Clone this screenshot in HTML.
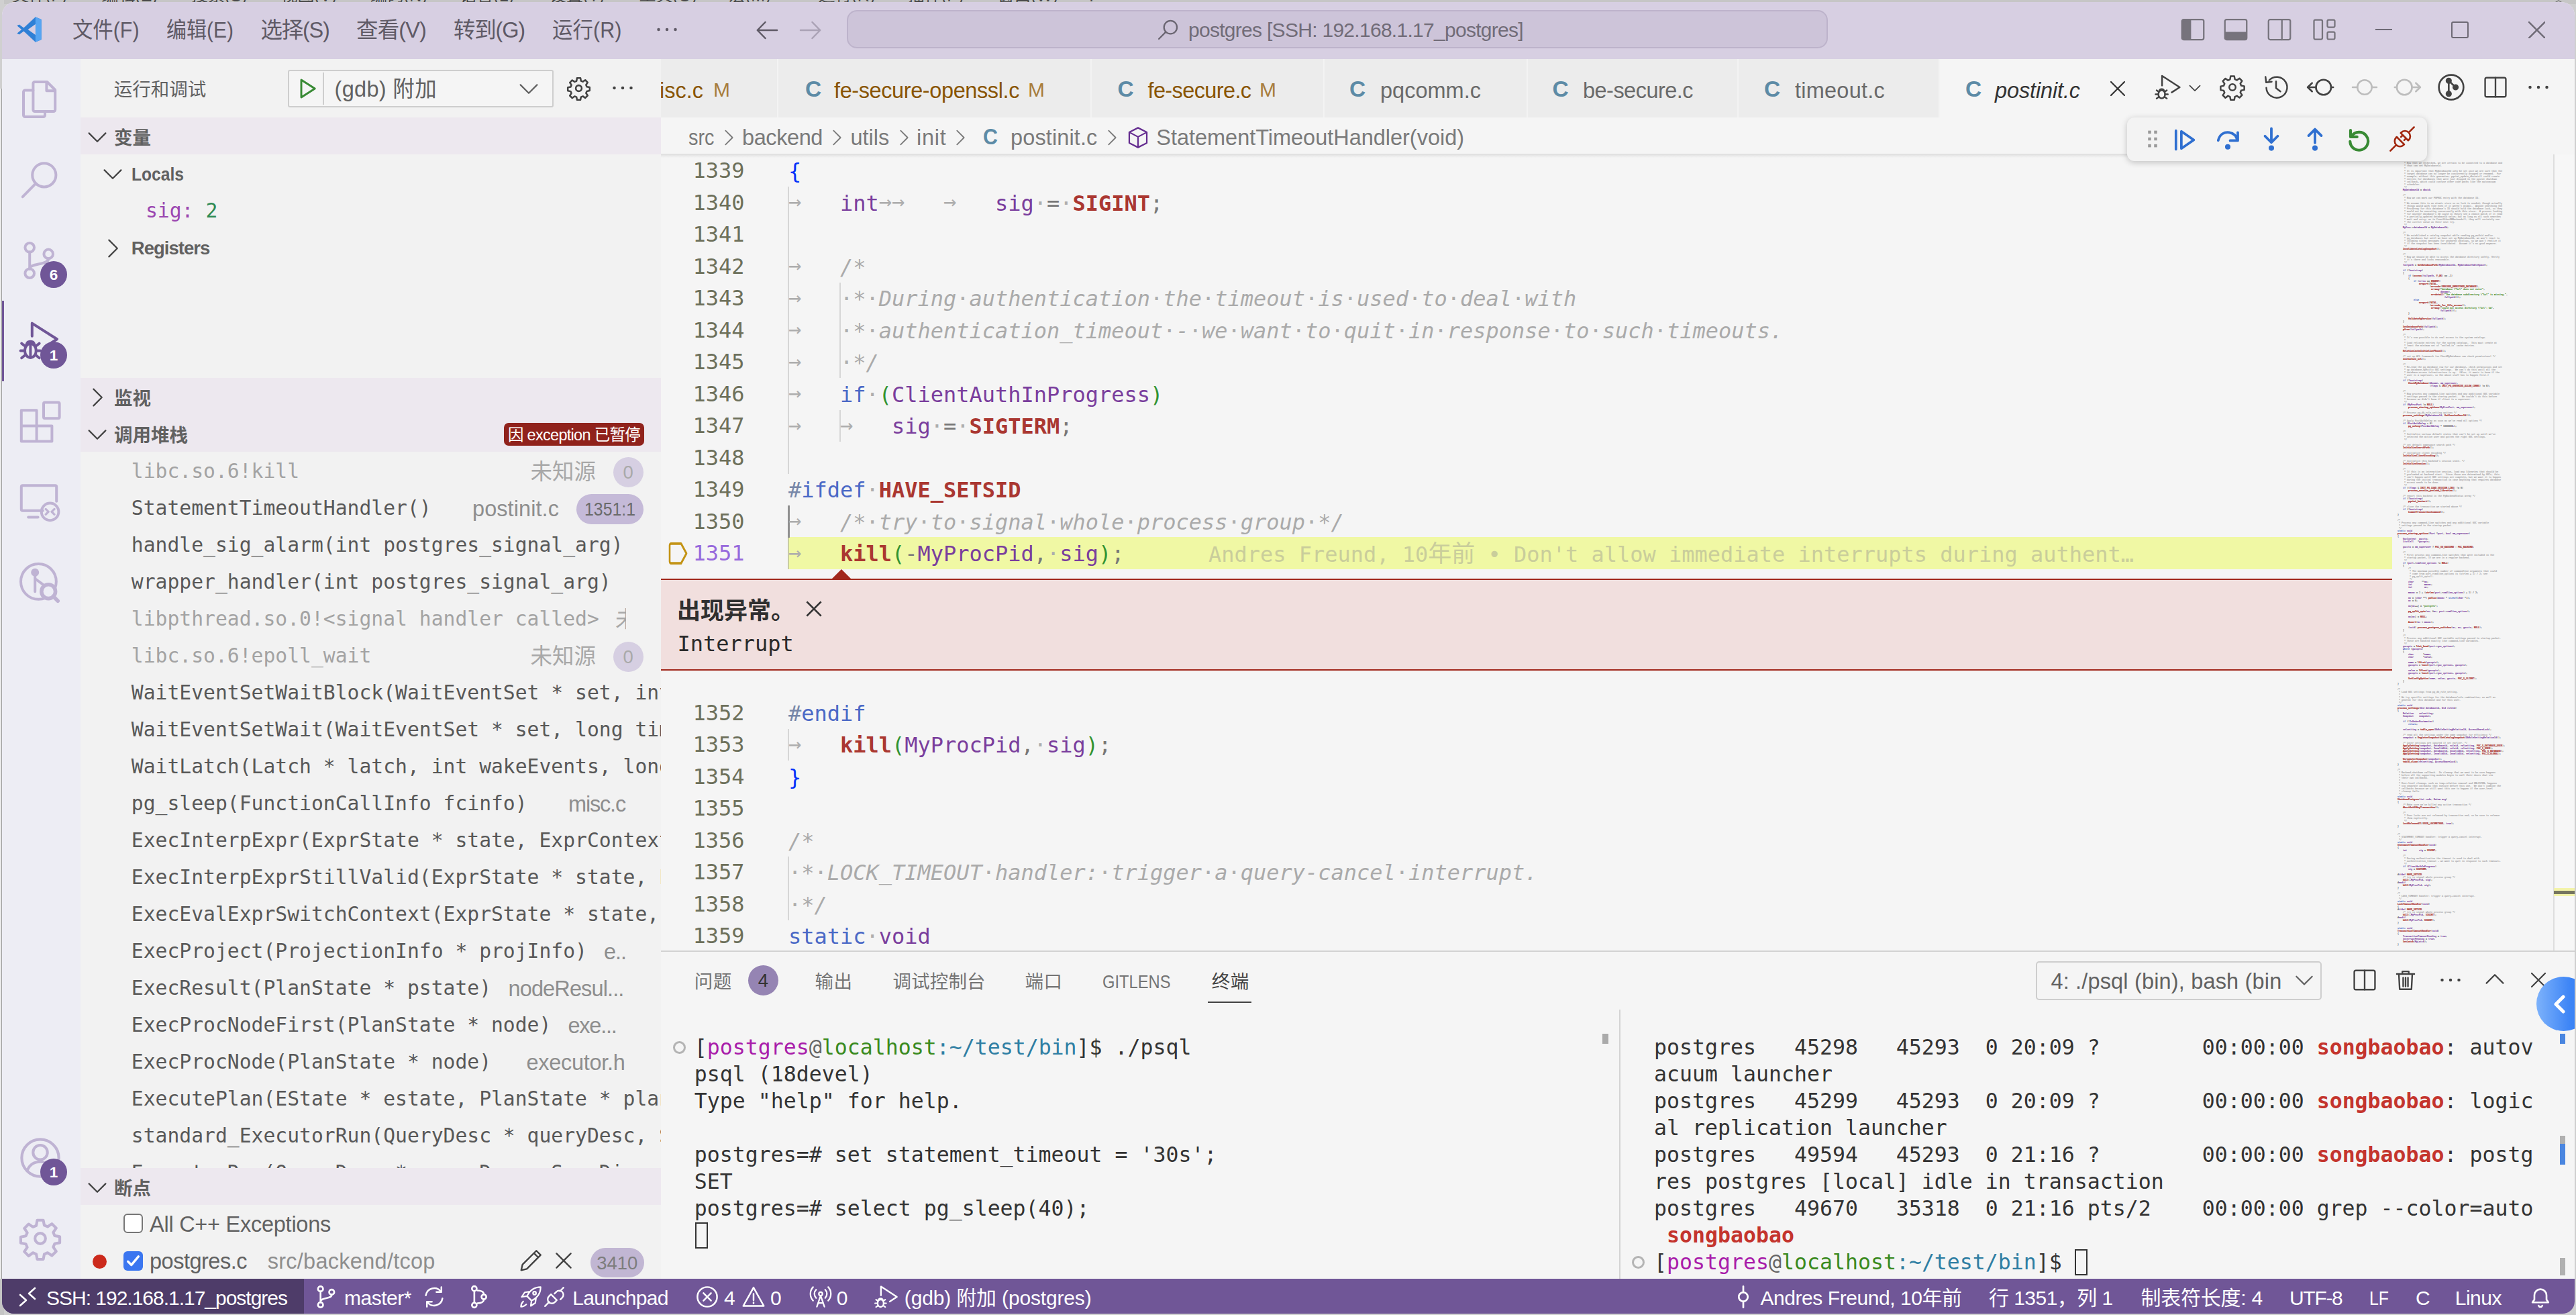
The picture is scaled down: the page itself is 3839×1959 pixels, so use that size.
<!DOCTYPE html>
<html lang="zh-CN"><head><meta charset="utf-8"><title>postinit.c - postgres [SSH: 192.168.1.17_postgres] - Visual Studio Code</title><style>
html,body{margin:0;padding:0}
body{width:3839px;height:1959px;overflow:hidden;background:#cfcfcf;position:relative;font-family:"Liberation Sans","Noto Sans CJK SC",sans-serif}
div,span,svg{position:absolute;box-sizing:border-box}
span{white-space:pre}
.u{font-family:"Liberation Sans","Noto Sans CJK SC",sans-serif}
.m{font-family:"DejaVu Sans Mono","Liberation Mono","Noto Sans CJK SC",monospace}
span span,span b,span i,.mm span,.mm b{position:static}
.mm{font-family:"DejaVu Sans Mono","Liberation Mono","Noto Sans CJK SC",monospace;white-space:pre;color:#777;-webkit-text-stroke:1.1px currentColor}
.mm .c{color:#aaa}.mm .k{color:#4b69c6}.mm .p{color:#7a3e9d}.mm .s{color:#448c27}.mm b{color:#aa3731}
</style></head>
<body>
<div style="left:0px;top:0px;width:3839px;height:6px;background:#c6c6c6;"></div>
<div style="left:0px;top:0px;width:6px;height:1959px;background:#d0d0d0;"></div>
<div style="left:0px;top:132px;width:2px;height:1773px;background:#ececec;"></div>
<div style="left:2px;top:132px;width:1.5px;height:1773px;background:#9c9c9c;"></div>
<div style="left:0px;top:1905px;width:6px;height:60px;background:#c4c4c4;"></div>
<div style="left:0px;top:0px;width:1700px;height:3px;overflow:hidden;">
<span class="u" style="top:-27.00px;font-size:25px;line-height:40px;color:#4a4a4a;left:18.0px;">文件(F)</span>
<span class="u" style="top:-27.00px;font-size:25px;line-height:40px;color:#4a4a4a;left:151.5px;">编辑(E)</span>
<span class="u" style="top:-27.00px;font-size:25px;line-height:40px;color:#4a4a4a;left:285.0px;">搜索(S)</span>
<span class="u" style="top:-27.00px;font-size:25px;line-height:40px;color:#4a4a4a;left:418.5px;">视图(V)</span>
<span class="u" style="top:-27.00px;font-size:25px;line-height:40px;color:#4a4a4a;left:552.0px;">编码(N)</span>
<span class="u" style="top:-27.00px;font-size:25px;line-height:40px;color:#4a4a4a;left:685.5px;">语言(L)</span>
<span class="u" style="top:-27.00px;font-size:25px;line-height:40px;color:#4a4a4a;left:819.0px;">设置(T)</span>
<span class="u" style="top:-27.00px;font-size:25px;line-height:40px;color:#4a4a4a;left:952.5px;">工具(O)</span>
<span class="u" style="top:-27.00px;font-size:25px;line-height:40px;color:#4a4a4a;left:1086.0px;">宏(M)</span>
<span class="u" style="top:-27.00px;font-size:25px;line-height:40px;color:#4a4a4a;left:1219.5px;">运行(R)</span>
<span class="u" style="top:-27.00px;font-size:25px;line-height:40px;color:#4a4a4a;left:1353.0px;">插件(P)</span>
<span class="u" style="top:-27.00px;font-size:25px;line-height:40px;color:#4a4a4a;left:1486.5px;">窗口(W)</span>
<span class="u" style="top:-27.00px;font-size:25px;line-height:40px;color:#4a4a4a;left:1620.0px;">?</span>
</div>
<div style="left:3808px;top:0px;width:10px;height:3px;background:#7a7a7a;clip-path:polygon(50% 0,100% 100%,75% 100%,50% 50%,25% 100%,0 100%);"></div>
<div style="left:3px;top:3px;width:3834px;height:1954px;overflow:hidden;background:#f5f5f5;border-radius:20px 20px 18px 18px;">
</div>
<div style="left:3px;top:3px;width:3834px;height:85px;background:#d7cfe2;border-radius:20px 20px 0 0;"></div>
<svg style="left:22px;top:24px;color:#616161;" width="43" height="40" viewBox="0 0 15.5 16" fill="none" stroke="currentColor" stroke-width="1" stroke-linecap="round" stroke-linejoin="round"><path d="M11.500 0.500L4.500 7 1.800 5 .5 5.700 3.200 8 .5 10.300l1.300.7L4.500 9l7 6.500 3.500-1.500V2z" fill="#2f80d6" stroke="none"/><path d="M11.500 .5l3.500 1.500v12l-3.500 1.500z" fill="#56a5f2" stroke="none"/><path d="M11.500 4.800L7 8l4.500 3.200z" fill="#d7cfe2" stroke="none"/></svg>
<span class="u" style="top:19.00px;font-size:32.5px;line-height:52px;color:#5f5a66;left:107.5px;transform:scaleX(0.9343);transform-origin:0 50%;">文件(F)</span>
<span class="u" style="top:19.00px;font-size:32.5px;line-height:52px;color:#5f5a66;left:248px;transform:scaleX(0.9231);transform-origin:0 50%;">编辑(E)</span>
<span class="u" style="top:19.00px;font-size:32.5px;line-height:52px;color:#5f5a66;left:388.6px;letter-spacing:-1.286px;">选择(S)</span>
<span class="u" style="top:19.00px;font-size:32.5px;line-height:52px;color:#5f5a66;left:531px;letter-spacing:-0.866px;">查看(V)</span>
<span class="u" style="top:19.00px;font-size:32.5px;line-height:52px;color:#5f5a66;left:676px;letter-spacing:-1.188px;">转到(G)</span>
<span class="u" style="top:19.00px;font-size:32.5px;line-height:52px;color:#5f5a66;left:822.6px;transform:scaleX(0.9389);transform-origin:0 50%;">运行(R)</span>
<svg style="left:974.0px;top:24.0px;color:#5f5a66;" width="40" height="40" viewBox="0 0 16 16" fill="none" stroke="currentColor" stroke-width="1.0" stroke-linecap="round" stroke-linejoin="round"><circle cx="3" cy="8" r=".9" fill="currentColor" stroke="none"/><circle cx="8" cy="8" r=".9" fill="currentColor" stroke="none"/><circle cx="13" cy="8" r=".9" fill="currentColor" stroke="none"/></svg>
<svg style="left:1123.0px;top:25.0px;color:#5f5a66;" width="40" height="40" viewBox="0 0 16 16" fill="none" stroke="currentColor" stroke-width="1.0" stroke-linecap="round" stroke-linejoin="round"><path d="M14 8H2.5M7 3.200L2.300 8l4.700 4.800"/></svg>
<svg style="left:1188.0px;top:25.0px;color:#aaa2b5;" width="40" height="40" viewBox="0 0 16 16" fill="none" stroke="currentColor" stroke-width="1.0" stroke-linecap="round" stroke-linejoin="round"><path d="M2 8h11.500M9 3.200L13.700 8 9 12.800"/></svg>
<div style="left:1262px;top:15px;width:1462px;height:57px;background:#cdc4d9;border:2px solid #bdb3cb;border-radius:15px;"></div>
<svg style="left:1723.0px;top:26.0px;color:#6a6571;" width="36" height="36" viewBox="0 0 16 16" fill="none" stroke="currentColor" stroke-width="1.0" stroke-linecap="round" stroke-linejoin="round"><circle cx="9.500" cy="6.500" r="4.300"/><path d="M6.400 9.600L1.800 14.200"/></svg>
<span class="u" style="top:20.50px;font-size:30px;line-height:48px;color:#716c78;left:1771px;letter-spacing:-0.712px;">postgres [SSH: 192.168.1.17_postgres]</span>
<svg style="left:3247.5px;top:23.5px;color:#76737c;" width="40" height="40" viewBox="0 0 16 16" fill="none" stroke="currentColor" stroke-width="0.9" stroke-linecap="round" stroke-linejoin="round"><rect x="1.5" y="2" width="13" height="12" rx="1"/><path d="M2 2.500h4.500v11H2z" fill="currentColor"/></svg>
<svg style="left:3312.0px;top:23.5px;color:#76737c;" width="40" height="40" viewBox="0 0 16 16" fill="none" stroke="currentColor" stroke-width="0.9" stroke-linecap="round" stroke-linejoin="round"><rect x="1.5" y="2" width="13" height="12" rx="1"/><path d="M2 9.800h12v3.700H2z" fill="currentColor"/></svg>
<svg style="left:3377.0px;top:23.5px;color:#76737c;" width="40" height="40" viewBox="0 0 16 16" fill="none" stroke="currentColor" stroke-width="0.9" stroke-linecap="round" stroke-linejoin="round"><rect x="1.5" y="2" width="13" height="12" rx="1"/><path d="M9.500 2v12"/></svg>
<svg style="left:3444.0px;top:23.5px;color:#76737c;" width="40" height="40" viewBox="0 0 16 16" fill="none" stroke="currentColor" stroke-width="0.9" stroke-linecap="round" stroke-linejoin="round"><rect x="1.800" y="2.200" width="5" height="11.600" rx=".8"/><rect x="9.800" y="2.200" width="4.400" height="4.400" rx=".8"/><rect x="9.800" y="9.400" width="4.400" height="4.400" rx=".8"/></svg>
<div style="left:3540px;top:43px;width:25px;height:2px;background:#6e6a75;"></div>
<div style="left:3653px;top:32px;width:25.5px;height:25px;background:transparent;border:2.500px solid #6e6a75;border-radius:3px;"></div>
<svg style="left:3767.5px;top:31.5px;color:#6e6a75;" width="25.5" height="25.5" viewBox="0 0 16 16" fill="none" stroke="currentColor" stroke-width="1.5" stroke-linecap="round" stroke-linejoin="round"><path d="M.5.5l15 15M15.500.5l-15 15"/></svg>
<div style="left:3px;top:88px;width:117px;height:1817px;background:#ededf4;"></div>
<svg style="left:27.0px;top:115.5px;color:#bfb3d3;" width="64" height="64" viewBox="0 0 16 16" fill="none" stroke="currentColor" stroke-width="1.0" stroke-linecap="round" stroke-linejoin="round"><path d="M5.6 4.6V2.1a.6.6 0 0 1 .6-.6h4.6l3 3v7.4a.6.6 0 0 1-.6.6H10"/><path d="M10.6 1.6v3.2h3.1"/><path d="M5.6 4.6H2.6a.6.6 0 0 0-.6.6v8.7a.6.6 0 0 0 .6.6h6.8a.6.6 0 0 0 .6-.6V12.5H6.2a.6.6 0 0 1-.6-.6z"/></svg>
<svg style="left:27.0px;top:235.5px;color:#bfb3d3;" width="64" height="64" viewBox="0 0 16 16" fill="none" stroke="currentColor" stroke-width="1.0" stroke-linecap="round" stroke-linejoin="round"><circle cx="9.7" cy="6.2" r="4.4"/><path d="M6.5 9.4L1.7 14.3"/></svg>
<svg style="left:27.0px;top:355.5px;color:#bfb3d3;" width="64" height="64" viewBox="0 0 16 16" fill="none" stroke="currentColor" stroke-width="1.0" stroke-linecap="round" stroke-linejoin="round"><circle cx="4.3" cy="3.2" r="1.7"/><circle cx="4.3" cy="12.8" r="1.7"/><circle cx="11.3" cy="5.6" r="1.7"/><path d="M4.3 4.9v6.2"/><path d="M11.3 7.3c0 2.6-7 1.6-7 3.8"/></svg>
<svg style="left:27.0px;top:475.5px;color:#705697;" width="64" height="64" viewBox="0 0 16 16" fill="none" stroke="currentColor" stroke-width="1.0" stroke-linecap="round" stroke-linejoin="round"><path d="M5.2 6.2V1.4l9.3 5.9-3.4 2.2"/><ellipse cx="4.6" cy="11.6" rx="2.1" ry="2.6"/><path d="M3 9.6C3.2 8.6 3.9 8.2 4.6 8.2s1.4.4 1.6 1.4"/><path d="M2.5 11.6H.9M8.3 11.6H6.7M2.7 10L1.3 8.9M6.5 10l1.4-1.1M2.7 13.2l-1.4 1.1M6.5 13.2l1.4 1.1M4.6 9.2v5"/></svg>
<svg style="left:27.0px;top:595.5px;color:#bfb3d3;" width="64" height="64" viewBox="0 0 16 16" fill="none" stroke="currentColor" stroke-width="1.0" stroke-linecap="round" stroke-linejoin="round"><path d="M1.2 3.8h5.700v11.600H1.200zM1.200 9.600h11.400M6.900 9.600h5.700v5.800H1.200" /><rect x="9.500" y=".9" width="5.900" height="5.900" rx=".5"/></svg>
<svg style="left:27.0px;top:715.5px;color:#bfb3d3;" width="64" height="64" viewBox="0 0 16 16" fill="none" stroke="currentColor" stroke-width="1.0" stroke-linecap="round" stroke-linejoin="round"><path d="M9.2 11.2H1.7a.5.5 0 0 1-.5-.5V2.3a.5.5 0 0 1 .5-.5h12.1a.5.5 0 0 1 .5.5v5.4"/><path d="M3.8 13.6h3.6"/><circle cx="11.9" cy="11.6" r="3.2"/><path d="M10.3 10.6l1 1-1 1M13.5 10.6l-1 1 1 1" stroke-width=".8"/></svg>
<svg style="left:27.0px;top:835.5px;color:#bfb3d3;" width="64" height="64" viewBox="0 0 16 16" fill="none" stroke="currentColor" stroke-width="1.0" stroke-linecap="round" stroke-linejoin="round"><circle cx="7.6" cy="7.6" r="6.6"/><circle cx="6.3" cy="4.2" r="1" fill="currentColor"/><path d="M6.3 5v6.3M6.3 6.5l3 2.2"/><circle cx="11.3" cy="11.3" r="2.6" stroke-width="1.4" fill="#ededf5"/><path d="M13.2 13.2l1.6 1.6" stroke-width="1.4"/></svg>
<div style="left:3px;top:447.5px;width:2.5px;height:120px;background:#705697;"></div>
<svg style="left:26.5px;top:1692.0px;color:#bfb3d3;" width="66" height="66" viewBox="0 0 16 16" fill="none" stroke="currentColor" stroke-width="1.0" stroke-linecap="round" stroke-linejoin="round"><circle cx="8" cy="8" r="6.7"/><circle cx="8" cy="6" r="2.6"/><path d="M3.3 12.6c.8-2.2 2.5-3.2 4.7-3.2s3.9 1 4.7 3.2"/></svg>
<svg style="left:26.5px;top:1812.0px;color:#bfb3d3;" width="66" height="66" viewBox="0 0 16 16" fill="none" stroke="currentColor" stroke-width="1.0" stroke-linecap="round" stroke-linejoin="round"><circle cx="8" cy="8" r="1.9"/><path d="M6.9 1.4h2.2l.35 1.85 1.2.5 1.55-1.05 1.55 1.55-1.05 1.55.5 1.2 1.85.35v2.2l-1.85.35-.5 1.2 1.05 1.55-1.55 1.55-1.55-1.05-1.2.5-.35 1.85H6.9l-.35-1.85-1.2-.5L3.8 14.3 2.25 12.75 3.3 11.2l-.5-1.2L.95 9.65v-2.2L2.8 7.1l.5-1.2L2.25 4.35 3.8 2.8l1.55 1.05 1.2-.5z"/></svg>
<div style="left:60px;top:389px;width:40px;height:40px;background:#705697;border-radius:20px;"></div>
<span class="u" style="top:391.50px;font-size:22.5px;line-height:36px;color:#fff;left:60px;font-weight:700;width:40px;text-align:center;">6</span>
<div style="left:60px;top:509px;width:40px;height:40px;background:#705697;border-radius:20px;"></div>
<span class="u" style="top:511.50px;font-size:22.5px;line-height:36px;color:#fff;left:60px;font-weight:700;width:40px;text-align:center;">1</span>
<div style="left:60px;top:1726px;width:40px;height:40px;background:#705697;border-radius:20px;"></div>
<span class="u" style="top:1728.50px;font-size:22.5px;line-height:36px;color:#fff;left:60px;font-weight:700;width:40px;text-align:center;">1</span>
<div style="left:120px;top:88px;width:865px;height:1817px;background:#f2f2f2;"></div>
<span class="u" style="top:112.00px;font-size:27.5px;line-height:44px;color:#616161;left:169.7px;letter-spacing:0.000px;">运行和调试</span>
<div style="left:429px;top:104px;width:396px;height:56px;background:#f5f5f5;border:2px solid #cecece;border-radius:3px;"></div>
<div style="left:481px;top:108px;width:2px;height:48px;background:#cecece;"></div>
<svg style="left:440.0px;top:114.0px;color:#388a34;" width="36" height="36" viewBox="0 0 16 16" fill="none" stroke="currentColor" stroke-width="1.3" stroke-linecap="round" stroke-linejoin="round"><path d="M4 2.2v11.600l9-5.8z"/></svg>
<span class="u" style="top:106.50px;font-size:32.5px;line-height:52px;color:#616161;left:498.5px;letter-spacing:0.324px;">(gdb) 附加</span>
<svg style="left:770.0px;top:114.0px;color:#616161;" width="36" height="36" viewBox="0 0 16 16" fill="none" stroke="currentColor" stroke-width="1.0" stroke-linecap="round" stroke-linejoin="round"><path d="M2.5 5.5L8 11l5.500-5.5"/></svg>
<svg style="left:843.5px;top:112.5px;color:#424242;" width="37" height="37" viewBox="0 0 16 16" fill="none" stroke="currentColor" stroke-width="1.1" stroke-linecap="round" stroke-linejoin="round"><circle cx="8" cy="8" r="1.9"/><path d="M6.9 1.4h2.2l.35 1.85 1.2.5 1.55-1.05 1.55 1.55-1.05 1.55.5 1.2 1.85.35v2.2l-1.85.35-.5 1.2 1.05 1.55-1.55 1.55-1.55-1.05-1.2.5-.35 1.85H6.9l-.35-1.85-1.2-.5L3.8 14.3 2.25 12.75 3.3 11.2l-.5-1.2L.95 9.65v-2.2L2.8 7.1l.5-1.2L2.25 4.35 3.8 2.8l1.55 1.05 1.2-.5z"/></svg>
<svg style="left:907.5px;top:111.0px;color:#424242;" width="40" height="40" viewBox="0 0 16 16" fill="none" stroke="currentColor" stroke-width="1.0" stroke-linecap="round" stroke-linejoin="round"><circle cx="3" cy="8" r=".9" fill="currentColor" stroke="none"/><circle cx="8" cy="8" r=".9" fill="currentColor" stroke="none"/><circle cx="13" cy="8" r=".9" fill="currentColor" stroke="none"/></svg>
<div style="left:120px;top:175px;width:865px;height:55px;background:#ede8ef;"></div>
<svg style="left:127.0px;top:186.0px;color:#424242;" width="36" height="36" viewBox="0 0 16 16" fill="none" stroke="currentColor" stroke-width="1.0" stroke-linecap="round" stroke-linejoin="round"><path d="M2.5 5.5L8 11l5.500-5.5"/></svg>
<span class="u" style="top:183.50px;font-size:27.5px;line-height:44px;color:#616161;left:170px;font-weight:700;letter-spacing:0.000px;">变量</span>
<svg style="left:150.0px;top:241.0px;color:#424242;" width="36" height="36" viewBox="0 0 16 16" fill="none" stroke="currentColor" stroke-width="1.0" stroke-linecap="round" stroke-linejoin="round"><path d="M2.5 5.5L8 11l5.500-5.5"/></svg>
<span class="u" style="top:238.00px;font-size:27.5px;line-height:44px;color:#616161;left:195.8px;font-weight:700;transform:scaleX(0.8953);transform-origin:0 50%;">Locals</span>
<span class="m" style="top:290.00px;font-size:29.7px;line-height:48px;color:#9b46b0;left:217px;"><span style="color:#9b46b0">sig:</span> <span style="color:#2f8a52">2</span></span>
<svg style="left:150.0px;top:352.0px;color:#424242;" width="36" height="36" viewBox="0 0 16 16" fill="none" stroke="currentColor" stroke-width="1.0" stroke-linecap="round" stroke-linejoin="round"><path d="M5.5 2.5L11 8l-5.5 5.500"/></svg>
<span class="u" style="top:348.00px;font-size:27.5px;line-height:44px;color:#616161;left:195.8px;font-weight:700;letter-spacing:-0.983px;">Registers</span>
<div style="left:120px;top:563px;width:865px;height:55px;background:#ede8ef;"></div>
<svg style="left:127.0px;top:574.0px;color:#424242;" width="36" height="36" viewBox="0 0 16 16" fill="none" stroke="currentColor" stroke-width="1.0" stroke-linecap="round" stroke-linejoin="round"><path d="M5.5 2.5L11 8l-5.5 5.500"/></svg>
<span class="u" style="top:571.50px;font-size:27.5px;line-height:44px;color:#616161;left:170px;font-weight:700;letter-spacing:0.000px;">监视</span>
<div style="left:120px;top:618px;width:865px;height:55px;background:#ede8ef;"></div>
<svg style="left:127.0px;top:629.0px;color:#424242;" width="36" height="36" viewBox="0 0 16 16" fill="none" stroke="currentColor" stroke-width="1.0" stroke-linecap="round" stroke-linejoin="round"><path d="M2.5 5.5L8 11l5.500-5.5"/></svg>
<span class="u" style="top:626.50px;font-size:27.5px;line-height:44px;color:#616161;left:170px;font-weight:700;letter-spacing:0.000px;">调用堆栈</span>
<div style="left:751px;top:630px;width:209px;height:34px;background:#90221c;border-radius:7px;"></div>
<span class="u" style="top:628.50px;font-size:23.5px;line-height:38px;color:#fff;left:757px;letter-spacing:-0.710px;">因 exception 已暂停</span>
<div style="left:120px;top:673px;width:865px;height:1067px;overflow:hidden;">
<span class="m" style="top:4.50px;font-size:29.7px;line-height:48px;color:#a3a3a3;left:75.80000000000001px;">libc.so.6!kill</span>
<span class="u" style="top:3.50px;font-size:32.5px;line-height:52px;color:#a8a8a8;left:670.6px;max-width:142px;overflow:hidden;">未知源</span>
<div style="left:794px;top:8.0px;width:45px;height:45px;border-radius:23px;background:#d6cfe2"></div>
<span class="u" style="top:8.50px;font-size:27.5px;line-height:44px;color:#a9a9a9;left:808.5px;">0</span>
<span class="m" style="top:59.50px;font-size:29.7px;line-height:48px;color:#585858;left:75.80000000000001px;">StatementTimeoutHandler()</span>
<span class="u" style="top:58.50px;font-size:32.5px;line-height:52px;color:#8e8e8e;left:584px;letter-spacing:0.073px;">postinit.c</span>
<div style="left:739px;top:63.0px;width:100px;height:45px;border-radius:23px;background:#c5bad8"></div>
<span class="u" style="top:63.50px;font-size:27.5px;line-height:44px;color:#6a6a6a;left:751px;transform:scaleX(0.9034);transform-origin:0 50%;">1351:1</span>
<span class="m" style="top:114.50px;font-size:29.7px;line-height:48px;color:#585858;left:75.80000000000001px;">handle_sig_alarm(int postgres_signal_arg)</span>
<span class="m" style="top:169.50px;font-size:29.7px;line-height:48px;color:#585858;left:75.80000000000001px;">wrapper_handler(int postgres_signal_arg)</span>
<span class="m" style="top:224.50px;font-size:29.7px;line-height:48px;color:#a3a3a3;left:75.80000000000001px;">libpthread.so.0!&lt;signal handler called&gt;</span>
<span class="u" style="top:223.50px;font-size:32.5px;line-height:52px;color:#a8a8a8;left:797px;max-width:16px;overflow:hidden;">未</span>
<span class="m" style="top:279.50px;font-size:29.7px;line-height:48px;color:#a3a3a3;left:75.80000000000001px;">libc.so.6!epoll_wait</span>
<span class="u" style="top:278.50px;font-size:32.5px;line-height:52px;color:#a8a8a8;left:670.6px;max-width:142px;overflow:hidden;">未知源</span>
<div style="left:794px;top:283.0px;width:45px;height:45px;border-radius:23px;background:#d6cfe2"></div>
<span class="u" style="top:283.50px;font-size:27.5px;line-height:44px;color:#a9a9a9;left:808.5px;">0</span>
<span class="m" style="top:334.50px;font-size:29.7px;line-height:48px;color:#585858;left:75.80000000000001px;">WaitEventSetWaitBlock(WaitEventSet * set, int cur_timeout, WaitEvent * occurred_events, int nevents)</span>
<span class="m" style="top:389.50px;font-size:29.7px;line-height:48px;color:#585858;left:75.80000000000001px;">WaitEventSetWait(WaitEventSet * set, long timeout, WaitEvent * occurred_events, int nevents)</span>
<span class="m" style="top:444.50px;font-size:29.7px;line-height:48px;color:#585858;left:75.80000000000001px;">WaitLatch(Latch * latch, int wakeEvents, long timeout, uint32 wait_event_info)</span>
<span class="m" style="top:499.50px;font-size:29.7px;line-height:48px;color:#585858;left:75.80000000000001px;">pg_sleep(FunctionCallInfo fcinfo)</span>
<span class="u" style="top:498.50px;font-size:32.5px;line-height:52px;color:#8e8e8e;left:727px;letter-spacing:-1.180px;">misc.c</span>
<span class="m" style="top:554.50px;font-size:29.7px;line-height:48px;color:#585858;left:75.80000000000001px;">ExecInterpExpr(ExprState * state, ExprContext * econtext, _Bool * isnull)</span>
<span class="m" style="top:609.50px;font-size:29.7px;line-height:48px;color:#585858;left:75.80000000000001px;">ExecInterpExprStillValid(ExprState * state, ExprContext * econtext, _Bool * isNull)</span>
<span class="m" style="top:664.50px;font-size:29.7px;line-height:48px;color:#585858;left:75.80000000000001px;">ExecEvalExprSwitchContext(ExprState * state, ExprContext * econtext, _Bool * isNull)</span>
<span class="m" style="top:719.50px;font-size:29.7px;line-height:48px;color:#585858;left:75.80000000000001px;">ExecProject(ProjectionInfo * projInfo)</span>
<span class="u" style="top:718.50px;font-size:32.5px;line-height:52px;color:#8e8e8e;left:780px;letter-spacing:-1.047px;">e..</span>
<span class="m" style="top:774.50px;font-size:29.7px;line-height:48px;color:#585858;left:75.80000000000001px;">ExecResult(PlanState * pstate)</span>
<span class="u" style="top:773.50px;font-size:32.5px;line-height:52px;color:#8e8e8e;left:637.5px;letter-spacing:-0.874px;">nodeResul...</span>
<span class="m" style="top:829.50px;font-size:29.7px;line-height:48px;color:#585858;left:75.80000000000001px;">ExecProcNodeFirst(PlanState * node)</span>
<span class="u" style="top:828.50px;font-size:32.5px;line-height:52px;color:#8e8e8e;left:726.5px;letter-spacing:-1.250px;">exe...</span>
<span class="m" style="top:884.50px;font-size:29.7px;line-height:48px;color:#585858;left:75.80000000000001px;">ExecProcNode(PlanState * node)</span>
<span class="u" style="top:883.50px;font-size:32.5px;line-height:52px;color:#8e8e8e;left:664.5px;letter-spacing:-0.297px;">executor.h</span>
<span class="m" style="top:939.50px;font-size:29.7px;line-height:48px;color:#585858;left:75.80000000000001px;">ExecutePlan(EState * estate, PlanState * planstate, _Bool use_parallel_mode)</span>
<span class="m" style="top:994.50px;font-size:29.7px;line-height:48px;color:#585858;left:75.80000000000001px;">standard_ExecutorRun(QueryDesc * queryDesc, ScanDirection direction, uint64 count)</span>
<span class="m" style="top:1049.50px;font-size:29.7px;line-height:48px;color:#585858;left:75.80000000000001px;">ExecutorRun(QueryDesc * queryDesc, ScanDirection direction, uint64 count)</span>
</div>
<div style="left:120px;top:1740px;width:865px;height:55px;background:#ede8ef;"></div>
<svg style="left:127.0px;top:1751.0px;color:#424242;" width="36" height="36" viewBox="0 0 16 16" fill="none" stroke="currentColor" stroke-width="1.0" stroke-linecap="round" stroke-linejoin="round"><path d="M2.5 5.5L8 11l5.500-5.5"/></svg>
<span class="u" style="top:1748.50px;font-size:27.5px;line-height:44px;color:#616161;left:170px;font-weight:700;letter-spacing:0.000px;">断点</span>
<div style="left:183.5px;top:1808px;width:29px;height:29px;background:#fff;border:2.500px solid #767676;border-radius:6px;"></div>
<span class="u" style="top:1797.50px;font-size:32.5px;line-height:52px;color:#616161;left:223px;letter-spacing:-0.255px;">All C++ Exceptions</span>
<div style="left:138px;top:1868.5px;width:21px;height:21px;background:#cc2a1c;border-radius:11px;"></div>
<div style="left:183.5px;top:1864px;width:29px;height:29px;background:#3b76f0;border-radius:6px;"></div>
<svg style="left:186px;top:1866px;color:#fff;" width="25" height="25" viewBox="0 0 16 16" fill="none" stroke="currentColor" stroke-width="2.2" stroke-linecap="round" stroke-linejoin="round"><path d="M3 8.500l3.300 3.300 6.700-8"/></svg>
<span class="u" style="top:1853.00px;font-size:32.5px;line-height:52px;color:#616161;left:223px;letter-spacing:-0.494px;">postgres.c</span>
<span class="u" style="top:1853.00px;font-size:32.5px;line-height:52px;color:#8e8e8e;left:398.7px;letter-spacing:0.270px;">src/backend/tcop</span>
<svg style="left:772.0px;top:1859.0px;color:#424242;" width="38" height="38" viewBox="0 0 16 16" fill="none" stroke="currentColor" stroke-width="1.0" stroke-linecap="round" stroke-linejoin="round"><path d="M2 14l.8-3.500L11.500 1.800l2.700 2.700-8.700 8.700zM10 3.300l2.700 2.700"/></svg>
<svg style="left:823.0px;top:1861.0px;color:#424242;" width="34" height="34" viewBox="0 0 16 16" fill="none" stroke="currentColor" stroke-width="1.1" stroke-linecap="round" stroke-linejoin="round"><path d="M3 3l10 10M13 3L3 13"/></svg>
<div style="left:880px;top:1859px;width:79.5px;height:44px;background:#c1b6d3;border-radius:22px;"></div>
<span class="u" style="top:1859.50px;font-size:27.5px;line-height:44px;color:#7d7d7d;left:880px;width:79.5px;text-align:center;">3410</span>
<div style="left:985px;top:88px;width:2852px;height:87px;background:#ececec;"></div>
<div style="left:2891px;top:88px;width:300.5px;height:87px;background:#f5f5f5;"></div>
<div style="left:3191.5px;top:88px;width:645.5px;height:87px;background:#f5f5f5;"></div>
<div style="left:1158px;top:88px;width:2px;height:87px;background:#f3f3f3;"></div>
<div style="left:1625.4px;top:88px;width:2px;height:87px;background:#f3f3f3;"></div>
<div style="left:1972.3px;top:88px;width:2px;height:87px;background:#f3f3f3;"></div>
<div style="left:2274.5px;top:88px;width:2px;height:87px;background:#f3f3f3;"></div>
<div style="left:2589px;top:88px;width:2px;height:87px;background:#f3f3f3;"></div>
<div style="left:2889px;top:88px;width:2px;height:87px;background:#f3f3f3;"></div>
<div style="left:985px;top:88px;width:175px;height:87px;overflow:hidden;">
<span class="u" style="top:20.50px;font-size:32.5px;line-height:52px;color:#895503;right:2791px;right:112px;">misc.c</span>
<span class="u" style="top:22.00px;font-size:30px;line-height:48px;color:#a87d3c;left:78px;">M</span>
</div>
<span class="u" style="top:106.00px;font-size:33.5px;line-height:54px;color:#5d8ba6;left:1200px;font-weight:700;">C</span>
<span class="u" style="top:108.50px;font-size:32.5px;line-height:52px;color:#895503;left:1243px;letter-spacing:-0.400px;">fe-secure-openssl.c</span>
<span class="u" style="top:110.00px;font-size:30px;line-height:48px;color:#a87d3c;left:1532px;">M</span>
<span class="u" style="top:106.00px;font-size:33.5px;line-height:54px;color:#5d8ba6;left:1665.5px;font-weight:700;">C</span>
<span class="u" style="top:108.50px;font-size:32.5px;line-height:52px;color:#895503;left:1710.5px;letter-spacing:-0.615px;">fe-secure.c</span>
<span class="u" style="top:110.00px;font-size:30px;line-height:48px;color:#a87d3c;left:1877px;">M</span>
<span class="u" style="top:106.00px;font-size:33.5px;line-height:54px;color:#5d8ba6;left:2011px;font-weight:700;">C</span>
<span class="u" style="top:108.50px;font-size:32.5px;line-height:52px;color:#6a6a6a;left:2057px;letter-spacing:0.012px;">pqcomm.c</span>
<span class="u" style="top:106.00px;font-size:33.5px;line-height:54px;color:#5d8ba6;left:2313.5px;font-weight:700;">C</span>
<span class="u" style="top:108.50px;font-size:32.5px;line-height:52px;color:#6a6a6a;left:2359px;letter-spacing:-0.528px;">be-secure.c</span>
<span class="u" style="top:106.00px;font-size:33.5px;line-height:54px;color:#5d8ba6;left:2629px;font-weight:700;">C</span>
<span class="u" style="top:108.50px;font-size:32.5px;line-height:52px;color:#6a6a6a;left:2675px;letter-spacing:0.238px;">timeout.c</span>
<span class="u" style="top:106.00px;font-size:33.5px;line-height:54px;color:#5d8ba6;left:2929px;font-weight:700;">C</span>
<span class="u" style="top:108.50px;font-size:32.5px;line-height:52px;color:#333;left:2973px;font-style:italic;letter-spacing:-0.127px;">postinit.c</span>
<svg style="left:3140.0px;top:116.0px;color:#333;" width="32" height="32" viewBox="0 0 16 16" fill="none" stroke="currentColor" stroke-width="1.1" stroke-linecap="round" stroke-linejoin="round"><path d="M3 3l10 10M13 3L3 13"/></svg>
<svg style="left:3209.0px;top:109.0px;color:#424242;" width="42" height="42" viewBox="0 0 16 16" fill="none" stroke="currentColor" stroke-width="0.95" stroke-linecap="round" stroke-linejoin="round"><path d="M5 7V1.500l10 6.500-4.500 2.900"/><ellipse cx="4.800" cy="12" rx="1.900" ry="2.300"/><path d="M3.300 10.300c.2-.9.800-1.300 1.500-1.300s1.300.4 1.500 1.300M2.900 12H1.300M8.300 12H6.700M3.100 10.600L1.900 9.700M6.500 10.600l1.200-.9M3.100 13.500l-1.200.9M6.500 13.500l1.200.9" stroke-width=".9"/></svg>
<svg style="left:3260.0px;top:120.0px;color:#424242;" width="22" height="22" viewBox="0 0 16 16" fill="none" stroke="currentColor" stroke-width="1.2" stroke-linecap="round" stroke-linejoin="round"><path d="M2.5 5.5L8 11l5.500-5.5"/></svg>
<svg style="left:3307.0px;top:110.0px;color:#424242;" width="40" height="40" viewBox="0 0 16 16" fill="none" stroke="currentColor" stroke-width="1.0" stroke-linecap="round" stroke-linejoin="round"><circle cx="8" cy="8" r="1.9"/><path d="M6.9 1.4h2.2l.35 1.85 1.2.5 1.55-1.05 1.55 1.55-1.05 1.55.5 1.2 1.85.35v2.2l-1.85.35-.5 1.2 1.05 1.55-1.55 1.55-1.55-1.05-1.2.5-.35 1.85H6.9l-.35-1.85-1.2-.5L3.8 14.3 2.25 12.75 3.3 11.2l-.5-1.2L.95 9.65v-2.2L2.8 7.1l.5-1.2L2.25 4.35 3.8 2.8l1.55 1.05 1.2-.5z"/></svg>
<svg style="left:3371.5px;top:110.0px;color:#424242;" width="40" height="40" viewBox="0 0 16 16" fill="none" stroke="currentColor" stroke-width="1.0" stroke-linecap="round" stroke-linejoin="round"><path d="M2.200 8.300a6.200 6.200 0 1 0 1.700-4.500"/><path d="M1.700 1.800l.4 3.300 3.300-.4M8 4.500V8.500l2.600 2"/></svg>
<svg style="left:3436.5px;top:109.0px;color:#424242;" width="42" height="42" viewBox="0 0 16 16" fill="none" stroke="currentColor" stroke-width="1.0" stroke-linecap="round" stroke-linejoin="round"><circle cx="9.800" cy="8" r="4.300"/><path d="M5.500 8H.800M3.300 5.600L.8 8l2.500 2.400M14.100 8h1.200"/></svg>
<svg style="left:3503.5px;top:110.0px;color:#bdbdbd;" width="40" height="40" viewBox="0 0 16 16" fill="none" stroke="currentColor" stroke-width="1.0" stroke-linecap="round" stroke-linejoin="round"><circle cx="8" cy="8" r="4.300"/><path d="M3.700 8H.8M12.300 8h2.900"/></svg>
<svg style="left:3567.0px;top:109.0px;color:#bdbdbd;" width="42" height="42" viewBox="0 0 16 16" fill="none" stroke="currentColor" stroke-width="1.0" stroke-linecap="round" stroke-linejoin="round"><circle cx="6.200" cy="8" r="4.300"/><path d="M10.500 8h4.700M12.700 5.600L15.200 8l-2.500 2.400M1.900 8H.7"/></svg>
<svg style="left:3632.0px;top:109.0px;color:#424242;" width="42" height="42" viewBox="0 0 16 16" fill="none" stroke="currentColor" stroke-width="1.0" stroke-linecap="round" stroke-linejoin="round"><circle cx="8" cy="8" r="7"/><circle cx="6.600" cy="4.300" r="1.250" fill="currentColor"/><circle cx="6.600" cy="11.700" r="1.250" fill="currentColor"/><circle cx="10.500" cy="8" r="1.250" fill="currentColor"/><path d="M6.600 4.300v7.400M6.600 4.300L10.500 8"/></svg>
<svg style="left:3700.0px;top:111.0px;color:#424242;" width="38" height="38" viewBox="0 0 16 16" fill="none" stroke="currentColor" stroke-width="1.0" stroke-linecap="round" stroke-linejoin="round"><rect x="1.5" y="2" width="13" height="12" rx="1"/><path d="M8 2v12"/></svg>
<svg style="left:3763.0px;top:110.0px;color:#424242;" width="40" height="40" viewBox="0 0 16 16" fill="none" stroke="currentColor" stroke-width="1.0" stroke-linecap="round" stroke-linejoin="round"><circle cx="3" cy="8" r=".9" fill="currentColor" stroke="none"/><circle cx="8" cy="8" r=".9" fill="currentColor" stroke="none"/><circle cx="13" cy="8" r=".9" fill="currentColor" stroke="none"/></svg>
<div style="left:985px;top:175px;width:2852px;height:55px;background:#f5f5f5;"></div>
<div style="left:985px;top:229px;width:2580px;height:6px;background:linear-gradient(#dcdcdc,rgba(245,245,245,0));"></div>
<span class="u" style="top:179.00px;font-size:32.5px;line-height:52px;color:#7a7a7a;left:1025.6px;transform:scaleX(0.8886);transform-origin:0 50%;">src</span>
<svg style="left:1071.0px;top:190.0px;color:#7a7a7a;" width="30" height="30" viewBox="0 0 16 16" fill="none" stroke="currentColor" stroke-width="1.0" stroke-linecap="round" stroke-linejoin="round"><path d="M5.5 2.5L11 8l-5.5 5.500"/></svg>
<span class="u" style="top:179.00px;font-size:32.5px;line-height:52px;color:#7a7a7a;left:1106px;letter-spacing:-0.411px;">backend</span>
<svg style="left:1232.0px;top:190.0px;color:#7a7a7a;" width="30" height="30" viewBox="0 0 16 16" fill="none" stroke="currentColor" stroke-width="1.0" stroke-linecap="round" stroke-linejoin="round"><path d="M5.5 2.5L11 8l-5.5 5.500"/></svg>
<span class="u" style="top:179.00px;font-size:32.5px;line-height:52px;color:#7a7a7a;left:1267.6px;letter-spacing:-0.059px;">utils</span>
<svg style="left:1332.0px;top:190.0px;color:#7a7a7a;" width="30" height="30" viewBox="0 0 16 16" fill="none" stroke="currentColor" stroke-width="1.0" stroke-linecap="round" stroke-linejoin="round"><path d="M5.5 2.5L11 8l-5.5 5.500"/></svg>
<span class="u" style="top:179.00px;font-size:32.5px;line-height:52px;color:#7a7a7a;left:1366px;letter-spacing:0.738px;">init</span>
<svg style="left:1416.0px;top:190.0px;color:#7a7a7a;" width="30" height="30" viewBox="0 0 16 16" fill="none" stroke="currentColor" stroke-width="1.0" stroke-linecap="round" stroke-linejoin="round"><path d="M5.5 2.5L11 8l-5.5 5.500"/></svg>
<span class="u" style="top:178.00px;font-size:32.5px;line-height:52px;color:#5d8ba6;left:1464.7px;font-weight:700;transform:scaleX(0.9368);transform-origin:0 50%;">C</span>
<span class="u" style="top:179.00px;font-size:32.5px;line-height:52px;color:#7a7a7a;left:1506px;letter-spacing:0.123px;">postinit.c</span>
<svg style="left:1642.0px;top:190.0px;color:#7a7a7a;" width="30" height="30" viewBox="0 0 16 16" fill="none" stroke="currentColor" stroke-width="1.0" stroke-linecap="round" stroke-linejoin="round"><path d="M5.5 2.5L11 8l-5.5 5.500"/></svg>
<svg style="left:1677.5px;top:186.5px;color:#652d90;" width="36" height="36" viewBox="0 0 16 16" fill="none" stroke="currentColor" stroke-width="1.0" stroke-linecap="round" stroke-linejoin="round"><path d="M8 1.500l5.800 2.900v7.200L8 14.500l-5.800-2.900V4.400zM2.300 4.500L8 7.500l5.700-3M8 7.500v7"/></svg>
<span class="u" style="top:179.00px;font-size:32.5px;line-height:52px;color:#7a7a7a;left:1723.3px;letter-spacing:-0.025px;">StatementTimeoutHandler(void)</span>
<div style="left:985px;top:230px;width:2580px;height:1186px;overflow:hidden;">
<div style="left:189.0px;top:569.75px;width:2391.0px;height:48.0px;background:#f0f8a4;"></div>
<div style="left:189.0px;top:48.25px;width:2px;height:47.5px;background:#d6d6d6;"></div>
<div style="left:189.0px;top:95.75px;width:2px;height:47.5px;background:#d6d6d6;"></div>
<div style="left:189.0px;top:143.25px;width:2px;height:47.5px;background:#d6d6d6;"></div>
<div style="left:189.0px;top:190.75px;width:2px;height:47.5px;background:#d6d6d6;"></div>
<div style="left:189.0px;top:238.25px;width:2px;height:47.5px;background:#d6d6d6;"></div>
<div style="left:189.0px;top:285.75px;width:2px;height:47.5px;background:#d6d6d6;"></div>
<div style="left:189.0px;top:333.25px;width:2px;height:47.5px;background:#d6d6d6;"></div>
<div style="left:189.0px;top:380.75px;width:2px;height:47.5px;background:#d6d6d6;"></div>
<div style="left:189.0px;top:428.25px;width:2px;height:47.5px;background:#d6d6d6;"></div>
<div style="left:266.0px;top:190.75px;width:2px;height:47.5px;background:#d6d6d6;"></div>
<div style="left:266.0px;top:238.25px;width:2px;height:47.5px;background:#d6d6d6;"></div>
<div style="left:266.0px;top:285.75px;width:2px;height:47.5px;background:#d6d6d6;"></div>
<div style="left:266.0px;top:380.75px;width:2px;height:47.5px;background:#d6d6d6;"></div>
<div style="left:188.5px;top:523.25px;width:3px;height:47.5px;background:#8f8f8f;"></div>
<div style="left:189.0px;top:570.75px;width:2px;height:47.5px;background:#c9cda0;"></div>
<div style="left:189.0px;top:855.75px;width:2px;height:47.5px;background:#d6d6d6;"></div>
<div style="left:189.0px;top:1045.75px;width:2px;height:47.5px;background:#d6d6d6;"></div>
<div style="left:189.0px;top:1093.25px;width:2px;height:47.5px;background:#d6d6d6;"></div>
<span class="m" style="top:-1.00px;font-size:32px;line-height:51px;color:#6d705b;left:47.5px;letter-spacing:-0.016px;">1339</span>
<span class="m" style="top:0.00px;font-size:32px;line-height:51px;color:#333;left:190.0px;letter-spacing:-0.016px;"><span style="color:#0431fa;">{</span></span>
<span class="m" style="top:46.50px;font-size:32px;line-height:51px;color:#6d705b;left:47.5px;letter-spacing:-0.016px;">1340</span>
<span class="m" style="top:47.50px;font-size:32px;line-height:51px;color:#333;left:190.0px;letter-spacing:-0.016px;"><span style="color:#adadad;position:relative;top:-2.500px">→</span>   <span style="color:#7a3e9d;">int</span><span style="color:#adadad;position:relative;top:-2.500px">→</span><span style="color:#adadad;position:relative;top:-2.500px">→</span>   <span style="color:#adadad;position:relative;top:-2.500px">→</span>   <span style="color:#7a3e9d;">sig</span><span style="color:#adadad">·</span><span style="color:#777777;">=</span><span style="color:#adadad">·</span><span style="color:#aa3731;font-weight:700;">SIGINT</span><span style="color:#777777;">;</span></span>
<span class="m" style="top:94.00px;font-size:32px;line-height:51px;color:#6d705b;left:47.5px;letter-spacing:-0.016px;">1341</span>
<span class="m" style="top:141.50px;font-size:32px;line-height:51px;color:#6d705b;left:47.5px;letter-spacing:-0.016px;">1342</span>
<span class="m" style="top:142.50px;font-size:32px;line-height:51px;color:#333;left:190.0px;letter-spacing:-0.016px;"><span style="color:#adadad;position:relative;top:-2.500px">→</span>   <span style="color:#aaaaaa;font-style:italic;">/*</span></span>
<span class="m" style="top:189.00px;font-size:32px;line-height:51px;color:#6d705b;left:47.5px;letter-spacing:-0.016px;">1343</span>
<span class="m" style="top:190.00px;font-size:32px;line-height:51px;color:#333;left:190.0px;letter-spacing:-0.016px;"><span style="color:#adadad;position:relative;top:-2.500px">→</span>   <span style="color:#adadad">·</span><span style="color:#aaaaaa;font-style:italic;">*</span><span style="color:#adadad">·</span><span style="color:#aaaaaa;font-style:italic;">During</span><span style="color:#adadad">·</span><span style="color:#aaaaaa;font-style:italic;">authentication</span><span style="color:#adadad">·</span><span style="color:#aaaaaa;font-style:italic;">the</span><span style="color:#adadad">·</span><span style="color:#aaaaaa;font-style:italic;">timeout</span><span style="color:#adadad">·</span><span style="color:#aaaaaa;font-style:italic;">is</span><span style="color:#adadad">·</span><span style="color:#aaaaaa;font-style:italic;">used</span><span style="color:#adadad">·</span><span style="color:#aaaaaa;font-style:italic;">to</span><span style="color:#adadad">·</span><span style="color:#aaaaaa;font-style:italic;">deal</span><span style="color:#adadad">·</span><span style="color:#aaaaaa;font-style:italic;">with</span></span>
<span class="m" style="top:236.50px;font-size:32px;line-height:51px;color:#6d705b;left:47.5px;letter-spacing:-0.016px;">1344</span>
<span class="m" style="top:237.50px;font-size:32px;line-height:51px;color:#333;left:190.0px;letter-spacing:-0.016px;"><span style="color:#adadad;position:relative;top:-2.500px">→</span>   <span style="color:#adadad">·</span><span style="color:#aaaaaa;font-style:italic;">*</span><span style="color:#adadad">·</span><span style="color:#aaaaaa;font-style:italic;">authentication_timeout</span><span style="color:#adadad">·</span><span style="color:#aaaaaa;font-style:italic;">-</span><span style="color:#adadad">·</span><span style="color:#aaaaaa;font-style:italic;">we</span><span style="color:#adadad">·</span><span style="color:#aaaaaa;font-style:italic;">want</span><span style="color:#adadad">·</span><span style="color:#aaaaaa;font-style:italic;">to</span><span style="color:#adadad">·</span><span style="color:#aaaaaa;font-style:italic;">quit</span><span style="color:#adadad">·</span><span style="color:#aaaaaa;font-style:italic;">in</span><span style="color:#adadad">·</span><span style="color:#aaaaaa;font-style:italic;">response</span><span style="color:#adadad">·</span><span style="color:#aaaaaa;font-style:italic;">to</span><span style="color:#adadad">·</span><span style="color:#aaaaaa;font-style:italic;">such</span><span style="color:#adadad">·</span><span style="color:#aaaaaa;font-style:italic;">timeouts.</span></span>
<span class="m" style="top:284.00px;font-size:32px;line-height:51px;color:#6d705b;left:47.5px;letter-spacing:-0.016px;">1345</span>
<span class="m" style="top:285.00px;font-size:32px;line-height:51px;color:#333;left:190.0px;letter-spacing:-0.016px;"><span style="color:#adadad;position:relative;top:-2.500px">→</span>   <span style="color:#adadad">·</span><span style="color:#aaaaaa;font-style:italic;">*/</span></span>
<span class="m" style="top:331.50px;font-size:32px;line-height:51px;color:#6d705b;left:47.5px;letter-spacing:-0.016px;">1346</span>
<span class="m" style="top:332.50px;font-size:32px;line-height:51px;color:#333;left:190.0px;letter-spacing:-0.016px;"><span style="color:#adadad;position:relative;top:-2.500px">→</span>   <span style="color:#4b69c6;">if</span><span style="color:#adadad">·</span><span style="color:#319331;">(</span><span style="color:#7a3e9d;">ClientAuthInProgress</span><span style="color:#319331;">)</span></span>
<span class="m" style="top:379.00px;font-size:32px;line-height:51px;color:#6d705b;left:47.5px;letter-spacing:-0.016px;">1347</span>
<span class="m" style="top:380.00px;font-size:32px;line-height:51px;color:#333;left:190.0px;letter-spacing:-0.016px;"><span style="color:#adadad;position:relative;top:-2.500px">→</span>   <span style="color:#adadad;position:relative;top:-2.500px">→</span>   <span style="color:#7a3e9d;">sig</span><span style="color:#adadad">·</span><span style="color:#777777;">=</span><span style="color:#adadad">·</span><span style="color:#aa3731;font-weight:700;">SIGTERM</span><span style="color:#777777;">;</span></span>
<span class="m" style="top:426.50px;font-size:32px;line-height:51px;color:#6d705b;left:47.5px;letter-spacing:-0.016px;">1348</span>
<span class="m" style="top:474.00px;font-size:32px;line-height:51px;color:#6d705b;left:47.5px;letter-spacing:-0.016px;">1349</span>
<span class="m" style="top:475.00px;font-size:32px;line-height:51px;color:#333;left:190.0px;letter-spacing:-0.016px;"><span style="color:#7787a8;">#</span><span style="color:#4b69c6;">ifdef</span><span style="color:#adadad">·</span><span style="color:#aa3731;font-weight:700;">HAVE_SETSID</span></span>
<span class="m" style="top:521.50px;font-size:32px;line-height:51px;color:#6d705b;left:47.5px;letter-spacing:-0.016px;">1350</span>
<span class="m" style="top:522.50px;font-size:32px;line-height:51px;color:#333;left:190.0px;letter-spacing:-0.016px;"><span style="color:#adadad;position:relative;top:-2.500px">→</span>   <span style="color:#aaaaaa;font-style:italic;">/*</span><span style="color:#adadad">·</span><span style="color:#aaaaaa;font-style:italic;">try</span><span style="color:#adadad">·</span><span style="color:#aaaaaa;font-style:italic;">to</span><span style="color:#adadad">·</span><span style="color:#aaaaaa;font-style:italic;">signal</span><span style="color:#adadad">·</span><span style="color:#aaaaaa;font-style:italic;">whole</span><span style="color:#adadad">·</span><span style="color:#aaaaaa;font-style:italic;">process</span><span style="color:#adadad">·</span><span style="color:#aaaaaa;font-style:italic;">group</span><span style="color:#adadad">·</span><span style="color:#aaaaaa;font-style:italic;">*/</span></span>
<span class="m" style="top:569.00px;font-size:32px;line-height:51px;color:#9769dc;left:47.5px;letter-spacing:-0.016px;">1351</span>
<span class="m" style="top:570.00px;font-size:32px;line-height:51px;color:#333;left:190.0px;letter-spacing:-0.016px;"><span style="color:#adadad;position:relative;top:-2.500px">→</span>   <span style="color:#aa3731;font-weight:700;">kill</span><span style="color:#319331;">(</span><span style="color:#777777;">-</span><span style="color:#7a3e9d;">MyProcPid</span><span style="color:#777777;">,</span><span style="color:#adadad">·</span><span style="color:#7a3e9d;">sig</span><span style="color:#319331;">)</span><span style="color:#777777;">;</span></span>
<span class="m" style="top:806.50px;font-size:32px;line-height:51px;color:#6d705b;left:47.5px;letter-spacing:-0.016px;">1352</span>
<span class="m" style="top:807.50px;font-size:32px;line-height:51px;color:#333;left:190.0px;letter-spacing:-0.016px;"><span style="color:#7787a8;">#</span><span style="color:#4b69c6;">endif</span></span>
<span class="m" style="top:854.00px;font-size:32px;line-height:51px;color:#6d705b;left:47.5px;letter-spacing:-0.016px;">1353</span>
<span class="m" style="top:855.00px;font-size:32px;line-height:51px;color:#333;left:190.0px;letter-spacing:-0.016px;"><span style="color:#adadad;position:relative;top:-2.500px">→</span>   <span style="color:#aa3731;font-weight:700;">kill</span><span style="color:#319331;">(</span><span style="color:#7a3e9d;">MyProcPid</span><span style="color:#777777;">,</span><span style="color:#adadad">·</span><span style="color:#7a3e9d;">sig</span><span style="color:#319331;">)</span><span style="color:#777777;">;</span></span>
<span class="m" style="top:901.50px;font-size:32px;line-height:51px;color:#6d705b;left:47.5px;letter-spacing:-0.016px;">1354</span>
<span class="m" style="top:902.50px;font-size:32px;line-height:51px;color:#333;left:190.0px;letter-spacing:-0.016px;"><span style="color:#0431fa;">}</span></span>
<span class="m" style="top:949.00px;font-size:32px;line-height:51px;color:#6d705b;left:47.5px;letter-spacing:-0.016px;">1355</span>
<span class="m" style="top:996.50px;font-size:32px;line-height:51px;color:#6d705b;left:47.5px;letter-spacing:-0.016px;">1356</span>
<span class="m" style="top:997.50px;font-size:32px;line-height:51px;color:#333;left:190.0px;letter-spacing:-0.016px;"><span style="color:#aaaaaa;font-style:italic;">/*</span></span>
<span class="m" style="top:1044.00px;font-size:32px;line-height:51px;color:#6d705b;left:47.5px;letter-spacing:-0.016px;">1357</span>
<span class="m" style="top:1045.00px;font-size:32px;line-height:51px;color:#333;left:190.0px;letter-spacing:-0.016px;"><span style="color:#adadad">·</span><span style="color:#aaaaaa;font-style:italic;">*</span><span style="color:#adadad">·</span><span style="color:#aaaaaa;font-style:italic;">LOCK_TIMEOUT</span><span style="color:#adadad">·</span><span style="color:#aaaaaa;font-style:italic;">handler:</span><span style="color:#adadad">·</span><span style="color:#aaaaaa;font-style:italic;">trigger</span><span style="color:#adadad">·</span><span style="color:#aaaaaa;font-style:italic;">a</span><span style="color:#adadad">·</span><span style="color:#aaaaaa;font-style:italic;">query-cancel</span><span style="color:#adadad">·</span><span style="color:#aaaaaa;font-style:italic;">interrupt.</span></span>
<span class="m" style="top:1091.50px;font-size:32px;line-height:51px;color:#6d705b;left:47.5px;letter-spacing:-0.016px;">1358</span>
<span class="m" style="top:1092.50px;font-size:32px;line-height:51px;color:#333;left:190.0px;letter-spacing:-0.016px;"><span style="color:#adadad">·</span><span style="color:#aaaaaa;font-style:italic;">*/</span></span>
<span class="m" style="top:1139.00px;font-size:32px;line-height:51px;color:#6d705b;left:47.5px;letter-spacing:-0.016px;">1359</span>
<span class="m" style="top:1140.00px;font-size:32px;line-height:51px;color:#333;left:190.0px;letter-spacing:-0.016px;"><span style="color:#4b69c6;">static</span><span style="color:#adadad">·</span><span style="color:#7a3e9d;">void</span></span>
<span class="m" style="top:570.00px;font-size:32px;line-height:51px;color:#c9cd9b;left:816px;letter-spacing:-0.016px;">Andres Freund, 10<span style="font-size:35px;letter-spacing:0">年前</span> • Don't allow immediate interrupts during authent…</span>
<svg style="left:9.5px;top:570.5px;color:#c39314" width="32" height="47" preserveAspectRatio="none" viewBox="0 0 16 16" fill="none" stroke="currentColor" stroke-width="1.3" stroke-linejoin="round"><path d="M2.500 3h7.500l4 5-4 5H2.500a1 1 0 0 1-1-1V4a1 1 0 0 1 1-1z"/></svg>
<div style="left:0px;top:632px;width:2580px;height:137px;background:#f1dfde;border-top:2px solid #a1281c;border-bottom:2px solid #a1281c;"></div>
<svg style="left:253.70000000000005px;top:618px" width="30" height="15" viewBox="0 0 30 15"><path d="M0 15L15 0l15 15z" fill="#a1281c"/></svg>
<span class="u" style="top:651.50px;font-size:35px;line-height:56px;color:#2f2f2f;left:24px;font-weight:700;">出现异常。</span>
<svg style="left:210.70000000000005px;top:660px;color:#333" width="34" height="34" viewBox="0 0 16 16" fill="none" stroke="currentColor" stroke-width="1.300"><path d="M3 3l10 10M13 3L3 13"/></svg>
<span class="m" style="top:703.50px;font-size:32px;line-height:51px;color:#2a2a2a;left:24.5px;letter-spacing:-0.016px;">Interrupt</span>
</div>
<div style="left:3805px;top:230px;width:1.5px;height:1186px;background:#dedede;"></div>
<div style="left:3806.5px;top:230px;width:30.5px;height:1186px;background:#f7f7f7;"></div>
<div style="left:3806px;top:1323px;width:31px;height:12px;background:#f3f3a9;"></div>
<div style="left:3806px;top:1327px;width:31px;height:5px;background:#767660;"></div>
<div style="left:3565px;top:230px;width:240px;height:1186px;overflow:hidden;">
<div class="mm" style="left:8px;top:-13px;transform:scale(0.166667);transform-origin:0 0;font-size:19.932px;line-height:24px;">    <span class="k">if</span> (!<span class="p">bootstrap</span>)
    {
        <b>CheckMyDatabase</b>(<span class="p">dbname</span>, <span class="p">am_superuser</span>, (<span class="p">flags</span> &amp; <b>INIT_PG_OVERRIDE_ALLOW_CONNS</b>) != 0);
    }

<span class="c">    /*</span>
<span class="c">     * Now that we rechecked, we are certain to be connected to a database and</span>
<span class="c">     * thus can set MyDatabaseId.</span>
<span class="c">     *</span>
<span class="c">     * It is important that MyDatabaseId only be set once we are sure that the</span>
<span class="c">     * target database can no longer be concurrently dropped or renamed.  For</span>
<span class="c">     * example, without this guarantee, pgstat_update_dbstats() could create</span>
<span class="c">     * entries for databases that were just dropped in the pgstat shutdown</span>
<span class="c">     * callback, which could confuse other code paths like the autovacuum</span>
<span class="c">     * scheduler.</span>
<span class="c">     */</span>
    <span class="p">MyDatabaseId</span> = <span class="p">dboid</span>;

<span class="c">    /*</span>
<span class="c">     * Now we can mark our PGPROC entry with the database ID.</span>
<span class="c">     *</span>
<span class="c">     * We assume this is an atomic store so no lock is needed; though actually</span>
<span class="c">     * things would work fine even if it weren't atomic.  Anyone searching the</span>
<span class="c">     * ProcArray for this database's ID should hold the database lock, so they</span>
<span class="c">     * would not be executing concurrently with this store.  A process looking</span>
<span class="c">     * for another database's ID could in theory see a chance match if it read</span>
<span class="c">     * a partially-updated databaseId value; but as long as all such searches</span>
<span class="c">     * wait and retry, as in CountOtherDBBackends(), they will certainly see</span>
<span class="c">     * the correct value on their next try.</span>
<span class="c">     */</span>
    <span class="p">MyProc</span>-&gt;<span class="p">databaseId</span> = <span class="p">MyDatabaseId</span>;

<span class="c">    /*</span>
<span class="c">     * We established a catalog snapshot while reading pg_authid and/or</span>
<span class="c">     * pg_database; but until we have set up MyDatabaseId, we won't react to</span>
<span class="c">     * incoming sinval messages for unshared catalogs, so we won't realize it</span>
<span class="c">     * if the snapshot has been invalidated.  Assume it's no good anymore.</span>
<span class="c">     */</span>
    <b>InvalidateCatalogSnapshot</b>();

<span class="c">    /*</span>
<span class="c">     * Now we should be able to access the database directory safely. Verify</span>
<span class="c">     * it's there and looks reasonable.</span>
<span class="c">     */</span>
    <span class="p">fullpath</span> = <b>GetDatabasePath</b>(<span class="p">MyDatabaseId</span>, <span class="p">MyDatabaseTableSpace</span>);

    <span class="k">if</span> (!<span class="p">bootstrap</span>)
    {
        <span class="k">if</span> (<b>access</b>(<span class="p">fullpath</span>, <b>F_OK</b>) == -1)
        {
            <span class="k">if</span> (<span class="p">errno</span> == <b>ENOENT</b>)
                <b>ereport</b>(<b>FATAL</b>,
                        (<b>errcode</b>(<b>ERRCODE_UNDEFINED_DATABASE</b>),
                         <b>errmsg</b>(<span class="s">"database \"%s\" does not exist"</span>,
                                <span class="p">dbname</span>),
                         <b>errdetail</b>(<span class="s">"The database subdirectory \"%s\" is missing."</span>,
                                   <span class="p">fullpath</span>)));
            <span class="k">else</span>
                <b>ereport</b>(<b>FATAL</b>,
                        (<b>errcode_for_file_access</b>(),
                         <b>errmsg</b>(<span class="s">"could not access directory \"%s\": %m"</span>,
                                <span class="p">fullpath</span>)));
        }

        <b>ValidatePgVersion</b>(<span class="p">fullpath</span>);
    }

    <b>SetDatabasePath</b>(<span class="p">fullpath</span>);
    <b>pfree</b>(<span class="p">fullpath</span>);

<span class="c">    /*</span>
<span class="c">     * It's now possible to do real access to the system catalogs.</span>
<span class="c">     *</span>
<span class="c">     * Load relcache entries for the system catalogs.  This must create at</span>
<span class="c">     * least the minimum set of "nailed-in" cache entries.</span>
<span class="c">     */</span>
    <b>RelationCacheInitializePhase3</b>();

<span class="c">    /* set up ACL framework (so CheckMyDatabase can check permissions) */</span>
    <b>initialize_acl</b>();

<span class="c">    /*</span>
<span class="c">     * Re-read the pg_database row for our database, check permissions and set</span>
<span class="c">     * up database-specific GUC settings.  We can't do this until all the</span>
<span class="c">     * database-access infrastructure is up.  (Also, it wants to know if the</span>
<span class="c">     * user is a superuser, so the above stuff has to happen first.)</span>
<span class="c">     */</span>
    <span class="k">if</span> (!<span class="p">bootstrap</span>)
        <b>CheckMyDatabase</b>(<span class="p">dbname</span>, <span class="p">am_superuser</span>,
                        (<span class="p">flags</span> &amp; <b>INIT_PG_OVERRIDE_ALLOW_CONNS</b>) != 0);

<span class="c">    /*</span>
<span class="c">     * Now process any command-line switches and any additional GUC variable</span>
<span class="c">     * settings passed in the startup packet.   We couldn't do this before</span>
<span class="c">     * because we didn't know if client is a superuser.</span>
<span class="c">     */</span>
    <span class="k">if</span> (<span class="p">MyProcPort</span> != <b>NULL</b>)
        <b>process_startup_options</b>(<span class="p">MyProcPort</span>, <span class="p">am_superuser</span>);

<span class="c">    /* Process pg_db_role_setting options */</span>
    <b>process_settings</b>(<span class="p">MyDatabaseId</span>, <b>GetSessionUserId</b>());

<span class="c">    /* Apply PostAuthDelay as soon as we've read all options */</span>
    <span class="k">if</span> (<span class="p">PostAuthDelay</span> &gt; 0)
        <b>pg_usleep</b>(<span class="p">PostAuthDelay</span> * 1000000<span class="p">L</span>);

<span class="c">    /*</span>
<span class="c">     * Initialize various default states that can't be set up until we've</span>
<span class="c">     * selected the active user and gotten the right GUC settings.</span>
<span class="c">     */</span>

<span class="c">    /* set default namespace search path */</span>
    <b>InitializeSearchPath</b>();

<span class="c">    /* initialize client encoding */</span>
    <b>InitializeClientEncoding</b>();

<span class="c">    /* Initialize this backend's session state. */</span>
    <b>InitializeSession</b>();

<span class="c">    /*</span>
<span class="c">     * If this is an interactive session, load any libraries that should be</span>
<span class="c">     * preloaded at backend start.  Since those are determined by GUCs, this</span>
<span class="c">     * can't happen until GUC settings are complete, but we want it to happen</span>
<span class="c">     * during the initial transaction in case anything that requires database</span>
<span class="c">     * access needs to be done.</span>
<span class="c">     */</span>
    <span class="k">if</span> ((<span class="p">flags</span> &amp; <b>INIT_PG_LOAD_SESSION_LIBS</b>) != 0)
        <b>process_session_preload_libraries</b>();

<span class="c">    /* report this backend in the PgBackendStatus array */</span>
    <span class="k">if</span> (!<span class="p">bootstrap</span>)
        <b>pgstat_bestart</b>();

<span class="c">    /* close the transaction we started above */</span>
    <span class="k">if</span> (!<span class="p">bootstrap</span>)
        <b>CommitTransactionCommand</b>();
}

<span class="c">/*</span>
<span class="c"> * Process any command-line switches and any additional GUC variable</span>
<span class="c"> * settings passed in the startup packet.</span>
<span class="c"> */</span>
<span class="k">static</span> <span class="p">void</span>
<b>process_startup_options</b>(<span class="p">Port</span> *<span class="p">port</span>, <span class="p">bool</span> <span class="p">am_superuser</span>)
{
    <span class="p">GucContext</span>  <span class="p">gucctx</span>;
    <span class="p">ListCell</span>   *<span class="p">gucopts</span>;

    <span class="p">gucctx</span> = <span class="p">am_superuser</span> ? <b>PGC_SU_BACKEND</b> : <b>PGC_BACKEND</b>;

<span class="c">    /*</span>
<span class="c">     * First process any command-line switches that were included in the</span>
<span class="c">     * startup packet, if we are in a regular backend.</span>
<span class="c">     */</span>
    <span class="k">if</span> (<span class="p">port</span>-&gt;<span class="p">cmdline_options</span> != <b>NULL</b>)
    {
<span class="c">        /*</span>
<span class="c">         * The maximum possible number of commandline arguments that could</span>
<span class="c">         * come from port-&gt;cmdline_options is (strlen + 1) / 2; see</span>
<span class="c">         * pg_split_opts().</span>
<span class="c">         */</span>
        <span class="p">char</span>      **<span class="p">av</span>;
        <span class="p">int</span>         <span class="p">maxac</span>;
        <span class="p">int</span>         <span class="p">ac</span>;

        <span class="p">maxac</span> = 2 + (<b>strlen</b>(<span class="p">port</span>-&gt;<span class="p">cmdline_options</span>) + 1) / 2;

        <span class="p">av</span> = (<span class="p">char</span> **) <b>palloc</b>(<span class="p">maxac</span> * <span class="k">sizeof</span>(<span class="p">char</span> *));
        <span class="p">ac</span> = 0;

        <span class="p">av</span>[<span class="p">ac</span>++] = <span class="s">"postgres"</span>;

        <b>pg_split_opts</b>(<span class="p">av</span>, &amp;<span class="p">ac</span>, <span class="p">port</span>-&gt;<span class="p">cmdline_options</span>);

        <span class="p">av</span>[<span class="p">ac</span>] = <b>NULL</b>;

        <b>Assert</b>(<span class="p">ac</span> &lt; <span class="p">maxac</span>);

        (<span class="p">void</span>) <b>process_postgres_switches</b>(<span class="p">ac</span>, <span class="p">av</span>, <span class="p">gucctx</span>, <b>NULL</b>);
    }

<span class="c">    /*</span>
<span class="c">     * Process any additional GUC variable settings passed in startup packet.</span>
<span class="c">     * These are handled exactly like command-line variables.</span>
<span class="c">     */</span>
    <span class="p">gucopts</span> = <b>list_head</b>(<span class="p">port</span>-&gt;<span class="p">guc_options</span>);
    <span class="k">while</span> (<span class="p">gucopts</span>)
    {
        <span class="p">char</span>       *<span class="p">name</span>;
        <span class="p">char</span>       *<span class="p">value</span>;

        <span class="p">name</span> = <b>lfirst</b>(<span class="p">gucopts</span>);
        <span class="p">gucopts</span> = <b>lnext</b>(<span class="p">port</span>-&gt;<span class="p">guc_options</span>, <span class="p">gucopts</span>);

        <span class="p">value</span> = <b>lfirst</b>(<span class="p">gucopts</span>);
        <span class="p">gucopts</span> = <b>lnext</b>(<span class="p">port</span>-&gt;<span class="p">guc_options</span>, <span class="p">gucopts</span>);

        <b>SetConfigOption</b>(<span class="p">name</span>, <span class="p">value</span>, <span class="p">gucctx</span>, <b>PGC_S_CLIENT</b>);
    }
}

<span class="c">/*</span>
<span class="c"> * Load GUC settings from pg_db_role_setting.</span>
<span class="c"> *</span>
<span class="c"> * We try specific settings for the database/role combination, as well as</span>
<span class="c"> * general for this database and for this user.</span>
<span class="c"> */</span>
<span class="k">static</span> <span class="p">void</span>
<b>process_settings</b>(<span class="p">Oid</span> <span class="p">databaseid</span>, <span class="p">Oid</span> <span class="p">roleid</span>)
{
    <span class="p">Relation</span>    <span class="p">relsetting</span>;
    <span class="p">Snapshot</span>    <span class="p">snapshot</span>;

    <span class="k">if</span> (!<span class="p">IsUnderPostmaster</span>)
        <span class="k">return</span>;

    <span class="p">relsetting</span> = <b>table_open</b>(<span class="p">DbRoleSettingRelationId</span>, <span class="p">AccessShareLock</span>);

<span class="c">    /* read all the settings under the same snapshot for efficiency */</span>
    <span class="p">snapshot</span> = <b>RegisterSnapshot</b>(<b>GetCatalogSnapshot</b>(<span class="p">DbRoleSettingRelationId</span>));

<span class="c">    /* Later settings are ignored if set earlier. */</span>
    <b>ApplySetting</b>(<span class="p">snapshot</span>, <span class="p">databaseid</span>, <span class="p">roleid</span>, <span class="p">relsetting</span>, <b>PGC_S_DATABASE_USER</b>);
    <b>ApplySetting</b>(<span class="p">snapshot</span>, <span class="p">InvalidOid</span>, <span class="p">roleid</span>, <span class="p">relsetting</span>, <b>PGC_S_USER</b>);
    <b>ApplySetting</b>(<span class="p">snapshot</span>, <span class="p">databaseid</span>, <span class="p">InvalidOid</span>, <span class="p">relsetting</span>, <b>PGC_S_DATABASE</b>);
    <b>ApplySetting</b>(<span class="p">snapshot</span>, <span class="p">InvalidOid</span>, <span class="p">InvalidOid</span>, <span class="p">relsetting</span>, <b>PGC_S_GLOBAL</b>);

    <b>UnregisterSnapshot</b>(<span class="p">snapshot</span>);
    <b>table_close</b>(<span class="p">relsetting</span>, <span class="p">AccessShareLock</span>);
}

<span class="c">/*</span>
<span class="c"> * Backend-shutdown callback.  Do cleanup that we want to be sure happens</span>
<span class="c"> * before all the supporting modules begin to nail their doors shut via</span>
<span class="c"> * their own callbacks.</span>
<span class="c"> *</span>
<span class="c"> * User-level cleanup, such as temp-relation removal and UNLISTEN, happens</span>
<span class="c"> * via separate callbacks that execute before this one.  We don't combine the</span>
<span class="c"> * callbacks because we still want this one to happen if the user-level</span>
<span class="c"> * cleanup fails.</span>
<span class="c"> */</span>
<span class="k">static</span> <span class="p">void</span>
<b>ShutdownPostgres</b>(<span class="p">int</span> <span class="p">code</span>, <span class="p">Datum</span> <span class="p">arg</span>)
{
<span class="c">    /* Make sure we've killed any active transaction */</span>
    <b>AbortOutOfAnyTransaction</b>();

<span class="c">    /*</span>
<span class="c">     * User locks are not released by transaction end, so be sure to release</span>
<span class="c">     * them explicitly.</span>
<span class="c">     */</span>
    <b>LockReleaseAll</b>(<b>USER_LOCKMETHOD</b>, <span class="p">true</span>);
}


<span class="c">/*</span>
<span class="c"> * STATEMENT_TIMEOUT handler: trigger a query-cancel interrupt.</span>
<span class="c"> */</span>
<span class="k">static</span> <span class="p">void</span>
<b>StatementTimeoutHandler</b>(<span class="p">void</span>)
{
    <span class="p">int</span>         <span class="p">sig</span> = <b>SIGINT</b>;

<span class="c">    /*</span>
<span class="c">     * During authentication the timeout is used to deal with</span>
<span class="c">     * authentication_timeout - we want to quit in response to such timeouts.</span>
<span class="c">     */</span>
    <span class="k">if</span> (<span class="p">ClientAuthInProgress</span>)
        <span class="p">sig</span> = <b>SIGTERM</b>;

#<span class="p">ifdef</span> <b>HAVE_SETSID</b>
<span class="c">    /* try to signal whole process group */</span>
    <b>kill</b>(-<span class="p">MyProcPid</span>, <span class="p">sig</span>);
#<span class="p">endif</span>
    <b>kill</b>(<span class="p">MyProcPid</span>, <span class="p">sig</span>);
}

<span class="c">/*</span>
<span class="c"> * LOCK_TIMEOUT handler: trigger a query-cancel interrupt.</span>
<span class="c"> */</span>
<span class="k">static</span> <span class="p">void</span>
<b>LockTimeoutHandler</b>(<span class="p">void</span>)
{
#<span class="p">ifdef</span> <b>HAVE_SETSID</b>
<span class="c">    /* try to signal whole process group */</span>
    <b>kill</b>(-<span class="p">MyProcPid</span>, <b>SIGINT</b>);
#<span class="p">endif</span>
    <b>kill</b>(<span class="p">MyProcPid</span>, <b>SIGINT</b>);
}

<span class="k">static</span> <span class="p">void</span>
<b>TransactionTimeoutHandler</b>(<span class="p">void</span>)
{
    <span class="p">TransactionTimeoutPending</span> = <span class="p">true</span>;
    <span class="p">InterruptPending</span> = <span class="p">true</span>;
    <b>SetLatch</b>(<span class="p">MyLatch</span>);
}</div>
</div>
<div style="left:3170px;top:175px;width:447px;height:65px;background:#f3f3f3;border-radius:11px;box-shadow:0 2px 10px rgba(0,0,0,.22);"></div>
<svg style="left:3189.5px;top:189.0px;color:#9a9a9a;" width="36" height="36" viewBox="0 0 16 16" fill="none" stroke="currentColor" stroke-width="1.0" stroke-linecap="round" stroke-linejoin="round"><g fill="currentColor" stroke="none"><rect x="5" y="2.500" width="2" height="2"/><rect x="9" y="2.500" width="2" height="2"/><rect x="5" y="7" width="2" height="2"/><rect x="9" y="7" width="2" height="2"/><rect x="5" y="11.500" width="2" height="2"/><rect x="9" y="11.500" width="2" height="2"/></g></svg>
<svg style="left:3237.0px;top:189.5px;color:#2f6fd0;" width="37" height="37" viewBox="0 0 16 16" fill="none" stroke="currentColor" stroke-width="1.6" stroke-linecap="round" stroke-linejoin="round"><path d="M2.500 2v12M6 2.500v11l8-5.500z"/></svg>
<svg style="left:3301.0px;top:189.0px;color:#2f6fd0;" width="38" height="38" viewBox="0 0 16 16" fill="none" stroke="currentColor" stroke-width="1.6" stroke-linecap="round" stroke-linejoin="round"><path d="M2 8.500C3 4.500 6 3 9 3.500s4.500 2.500 5 5M14.300 3.500V8.600H9.500"/><circle cx="8" cy="12.500" r="1.700" fill="currentColor" stroke="none"/></svg>
<svg style="left:3365.5px;top:189.0px;color:#2f6fd0;" width="38" height="38" viewBox="0 0 16 16" fill="none" stroke="currentColor" stroke-width="1.6" stroke-linecap="round" stroke-linejoin="round"><path d="M8 1v8.500M4 5.800L8 9.800l4-4"/><circle cx="8" cy="13.300" r="1.700" fill="currentColor" stroke="none"/></svg>
<svg style="left:3431.0px;top:189.0px;color:#2f6fd0;" width="38" height="38" viewBox="0 0 16 16" fill="none" stroke="currentColor" stroke-width="1.6" stroke-linecap="round" stroke-linejoin="round"><path d="M8 10V1.500M4 5.500L8 1.500l4 4"/><circle cx="8" cy="13.300" r="1.700" fill="currentColor" stroke="none"/></svg>
<svg style="left:3496.5px;top:189.5px;color:#388a34;" width="37" height="37" viewBox="0 0 16 16" fill="none" stroke="currentColor" stroke-width="1.8" stroke-linecap="round" stroke-linejoin="round"><path d="M3.300 5.500A5.800 5.800 0 1 1 2.300 9"/><path d="M2.600 1.800v4.200h4.200"/></svg>
<svg style="left:3558.5px;top:186.0px;color:#a1260d;" width="42" height="42" viewBox="0 0 16 16" fill="none" stroke="currentColor" stroke-width="1.0" stroke-linecap="round" stroke-linejoin="round"><g transform="rotate(-45 8 8)"><path d="M-1.500 8H3.200M13.200 8h4.300M6.600 5H6.200a3 3 0 0 0 0 6h.400zM9.800 5v6h.400a3 3 0 0 0 0-6zM9.800 6.700H8.300M9.800 9.300H8.300"/></g></svg>
<div style="left:985px;top:1416px;width:2852px;height:2px;background:#d2d2d2;"></div>
<span class="u" style="top:1441.00px;font-size:27.5px;line-height:44px;color:#747474;left:1034.7px;letter-spacing:0.500px;">问题</span>
<div style="left:1115px;top:1438px;width:45px;height:45px;background:#9584b3;border-radius:23px;"></div>
<span class="u" style="top:1439.00px;font-size:27.5px;line-height:44px;color:#333;left:1115px;width:45px;text-align:center;">4</span>
<span class="u" style="top:1441.00px;font-size:27.5px;line-height:44px;color:#747474;left:1214.5px;letter-spacing:0.500px;">输出</span>
<span class="u" style="top:1441.00px;font-size:27.5px;line-height:44px;color:#747474;left:1330.6px;letter-spacing:0.100px;">调试控制台</span>
<span class="u" style="top:1441.00px;font-size:27.5px;line-height:44px;color:#747474;left:1527.6px;letter-spacing:0.500px;">端口</span>
<span class="u" style="top:1441.00px;font-size:27.5px;line-height:44px;color:#747474;left:1642.6px;transform:scaleX(0.8626);transform-origin:0 50%;">GITLENS</span>
<span class="u" style="top:1441.00px;font-size:27.5px;line-height:44px;color:#424242;left:1805.7px;letter-spacing:0.500px;">终端</span>
<div style="left:1800px;top:1492px;width:65px;height:2px;background:#424242;"></div>
<div style="left:3034px;top:1432px;width:426px;height:58px;background:#f5f5f5;border:2px solid #cecece;border-radius:5px;"></div>
<span class="u" style="top:1436.00px;font-size:32.5px;line-height:52px;color:#616161;left:3056.4px;letter-spacing:0.168px;">4: ./psql (bin), bash (bin</span>
<svg style="left:3417.0px;top:1443.0px;color:#616161;" width="34" height="34" viewBox="0 0 16 16" fill="none" stroke="currentColor" stroke-width="1.0" stroke-linecap="round" stroke-linejoin="round"><path d="M2.5 5.5L8 11l5.500-5.5"/></svg>
<svg style="left:3505.0px;top:1441.0px;color:#424242;" width="38" height="38" viewBox="0 0 16 16" fill="none" stroke="currentColor" stroke-width="1.0" stroke-linecap="round" stroke-linejoin="round"><rect x="1.5" y="2" width="13" height="12" rx="1"/><path d="M8 2v12"/></svg>
<svg style="left:3566.0px;top:1441.0px;color:#424242;" width="38" height="38" viewBox="0 0 16 16" fill="none" stroke="currentColor" stroke-width="1.0" stroke-linecap="round" stroke-linejoin="round"><path d="M2.500 4.200h11M6 4V2.600h4V4M3.800 4.400l.5 9.400h7.400l.5-9.400M6.500 6.500v5.500M9.500 6.500v5.500M8 6.500v5.500"/></svg>
<svg style="left:3632.0px;top:1440.0px;color:#424242;" width="40" height="40" viewBox="0 0 16 16" fill="none" stroke="currentColor" stroke-width="1.0" stroke-linecap="round" stroke-linejoin="round"><circle cx="3" cy="8" r=".9" fill="currentColor" stroke="none"/><circle cx="8" cy="8" r=".9" fill="currentColor" stroke="none"/><circle cx="13" cy="8" r=".9" fill="currentColor" stroke="none"/></svg>
<svg style="left:3700.0px;top:1441.0px;color:#424242;" width="36" height="36" viewBox="0 0 16 16" fill="none" stroke="currentColor" stroke-width="1.0" stroke-linecap="round" stroke-linejoin="round"><path d="M2.5 10.5L8 5l5.5 5.5"/></svg>
<svg style="left:3766.5px;top:1444.0px;color:#424242;" width="32" height="32" viewBox="0 0 16 16" fill="none" stroke="currentColor" stroke-width="1.1" stroke-linecap="round" stroke-linejoin="round"><path d="M3 3l10 10M13 3L3 13"/></svg>
<span class="m" style="top:1535.00px;font-size:31.55px;line-height:50px;color:#333;left:1034.8px;"><span style="color:#333;">[</span><span style="color:#a91daa;">postgres</span><span style="color:#666;">@</span><span style="color:#3a8a1e;">localhost</span><span style="color:#2f7ea3;">:~/test/bin</span><span style="color:#333;">]$ </span>./psql</span>
<span class="m" style="top:1575.00px;font-size:31.55px;line-height:50px;color:#333;left:1034.8px;">psql (18devel)</span>
<span class="m" style="top:1615.00px;font-size:31.55px;line-height:50px;color:#333;left:1034.8px;">Type "help" for help.</span>
<span class="m" style="top:1695.00px;font-size:31.55px;line-height:50px;color:#333;left:1034.8px;">postgres=# set statement_timeout = '30s';</span>
<span class="m" style="top:1735.00px;font-size:31.55px;line-height:50px;color:#333;left:1034.8px;">SET</span>
<span class="m" style="top:1775.00px;font-size:31.55px;line-height:50px;color:#333;left:1034.8px;">postgres=# select pg_sleep(40);</span>
<div style="left:1036px;top:1821px;width:19px;height:39px;background:transparent;border:2px solid #333;"></div>
<div style="left:1003px;top:1551px;width:19px;height:19px;background:transparent;border:3px solid #b4b4b4;border-radius:10px;"></div>
<div style="left:2388px;top:1540px;width:9px;height:15px;background:#aaa;"></div>
<div style="left:2413px;top:1503.5px;width:2px;height:402px;background:#d4d4d4;"></div>
<span class="m" style="top:1535.00px;font-size:31.55px;line-height:50px;color:#333;left:2465px;">postgres   45298   45293  0 20:09 ?        00:00:00 <span style="color:#c4342d;font-weight:700;">songbaobao</span>: autov</span>
<span class="m" style="top:1575.00px;font-size:31.55px;line-height:50px;color:#333;left:2465px;">acuum launcher</span>
<span class="m" style="top:1615.00px;font-size:31.55px;line-height:50px;color:#333;left:2465px;">postgres   45299   45293  0 20:09 ?        00:00:00 <span style="color:#c4342d;font-weight:700;">songbaobao</span>: logic</span>
<span class="m" style="top:1655.00px;font-size:31.55px;line-height:50px;color:#333;left:2465px;">al replication launcher</span>
<span class="m" style="top:1695.00px;font-size:31.55px;line-height:50px;color:#333;left:2465px;">postgres   49594   45293  0 21:16 ?        00:00:00 <span style="color:#c4342d;font-weight:700;">songbaobao</span>: postg</span>
<span class="m" style="top:1735.00px;font-size:31.55px;line-height:50px;color:#333;left:2465px;">res postgres [local] idle in transaction</span>
<span class="m" style="top:1775.00px;font-size:31.55px;line-height:50px;color:#333;left:2465px;">postgres   49670   35318  0 21:16 pts/2    00:00:00 grep --color=auto</span>
<span class="m" style="top:1815.00px;font-size:31.55px;line-height:50px;color:#333;left:2465px;"> <span style="color:#c4342d;font-weight:700;">songbaobao</span></span>
<span class="m" style="top:1855.00px;font-size:31.55px;line-height:50px;color:#333;left:2465px;"><span style="color:#333;">[</span><span style="color:#a91daa;">postgres</span><span style="color:#666;">@</span><span style="color:#3a8a1e;">localhost</span><span style="color:#2f7ea3;">:~/test/bin</span><span style="color:#333;">]$ </span></span>
<div style="left:3092px;top:1861px;width:19px;height:39px;background:transparent;border:2px solid #333;"></div>
<div style="left:2432px;top:1871px;width:19px;height:19px;background:transparent;border:3px solid #b4b4b4;border-radius:10px;"></div>
<div style="left:3815px;top:1540px;width:8px;height:15px;background:#4a86e0;"></div>
<div style="left:3815px;top:1692px;width:8px;height:12px;background:#b0b0b0;"></div>
<div style="left:3815px;top:1704px;width:8px;height:31px;background:#4a86e0;"></div>
<div style="left:3815px;top:1874px;width:8px;height:26px;background:#b0b0b0;"></div>
<div style="left:3700px;top:1440px;width:137px;height:110px;overflow:hidden;">
<div style="left:80px;top:15px;width:81px;height:81px;border-radius:41px;background:linear-gradient(90deg,#7db2fb,#3f86f6 60%,#2a78f5)"></div>
<svg style="left:104px;top:41px" width="22" height="30" viewBox="0 0 22 30" fill="none" stroke="#fff" stroke-width="5" stroke-linecap="round" stroke-linejoin="round"><path d="M16 4L5 15l11 11"/></svg>
</div>
<div style="left:3px;top:1905px;width:3834px;height:52px;background:#705697;border-radius:0 0 18px 18px;"></div>
<div style="left:3px;top:1905px;width:450px;height:52px;background:#4e3c69;border-radius:0 0 0 18px;"></div>
<svg style="left:25.0px;top:1916.0px;color:#fff;" width="32" height="32" viewBox="0 0 16 16" fill="none" stroke="currentColor" stroke-width="1.3" stroke-linecap="round" stroke-linejoin="round"><path d="M2.500 6.500L7 10.500l-4.500 4M13.500 1.500L9 5.500l4.500 4"/></svg>
<span class="u" style="top:1909.50px;font-size:30px;line-height:48px;color:#fff;left:69px;letter-spacing:-1.011px;">SSH: 192.168.1.17_postgres</span>
<svg style="left:467.0px;top:1913.0px;color:#fff;" width="38" height="38" viewBox="0 0 16 16" fill="none" stroke="currentColor" stroke-width="1.1" stroke-linecap="round" stroke-linejoin="round"><circle cx="4.500" cy="3" r="1.600"/><circle cx="4.500" cy="13" r="1.600"/><circle cx="11.500" cy="5" r="1.600"/><path d="M4.500 4.600v6.800M11.500 6.600c0 3-7 1.500-7 4.500"/></svg>
<span class="u" style="top:1909.50px;font-size:30px;line-height:48px;color:#fff;left:513px;letter-spacing:-0.480px;">master*</span>
<svg style="left:629.0px;top:1914.0px;color:#fff;" width="36" height="36" viewBox="0 0 16 16" fill="none" stroke="currentColor" stroke-width="1.1" stroke-linecap="round" stroke-linejoin="round"><path d="M2.500 7a5.600 5.600 0 0 1 10-2.500M13.500 9a5.600 5.600 0 0 1-10 2.500"/><path d="M12.800 1.500v3.300H9.500M3.200 14.500v-3.300h3.300"/></svg>
<svg style="left:695.0px;top:1913.0px;color:#fff;" width="38" height="38" viewBox="0 0 16 16" fill="none" stroke="currentColor" stroke-width="1.1" stroke-linecap="round" stroke-linejoin="round"><circle cx="5" cy="2.800" r="1.500"/><circle cx="5" cy="13.200" r="1.500"/><circle cx="11" cy="8" r="1.500"/><path d="M5 4.300v7.400M7 4c2 0 4 .8 4 2.500M11 9.500c0 1.700-2 2.500-4 2.500"/></svg>
<svg style="left:772.5px;top:1914.0px;color:#fff;" width="36" height="36" viewBox="0 0 16 16" fill="none" stroke="currentColor" stroke-width="1.0" stroke-linecap="round" stroke-linejoin="round"><path d="M14.500 1.500c-4 0-7 2-9 6l3 3c4-2 6-5 6-9zM5.500 7.500l-3.500.5 2-3 3.500-.5M8.500 10.500L8 14l3-2 .5-3.500M3 11c-1 1-1.500 2.500-1.500 3.500 1 0 2.500-.5 3.500-1.500"/><circle cx="10.500" cy="5.500" r="1"/></svg>
<svg style="left:809.0px;top:1915.0px;color:#fff;" width="34" height="34" viewBox="0 0 16 16" fill="none" stroke="currentColor" stroke-width="1.1" stroke-linecap="round" stroke-linejoin="round"><path d="M1.500 14.500l3-3M14.500 1.500l-2.500 2.500M5.700 6.200l4.100 4.100-1.500 1.500a2.900 2.900 0 0 1-4.100-4.100zM8.200 5.700l1.300-1.300a2.900 2.900 0 0 1 4.100 4.100L12.300 9.800"/></svg>
<span class="u" style="top:1909.50px;font-size:30px;line-height:48px;color:#fff;left:853.3px;letter-spacing:-0.665px;">Launchpad</span>
<svg style="left:1036.0px;top:1914.0px;color:#fff;" width="36" height="36" viewBox="0 0 16 16" fill="none" stroke="currentColor" stroke-width="1.1" stroke-linecap="round" stroke-linejoin="round"><circle cx="8" cy="8" r="6.500"/><path d="M5.500 5.500l5 5M10.500 5.500l-5 5"/></svg>
<span class="u" style="top:1909.50px;font-size:30px;line-height:48px;color:#fff;left:1079px;">4</span>
<svg style="left:1105.0px;top:1914.0px;color:#fff;" width="36" height="36" viewBox="0 0 16 16" fill="none" stroke="currentColor" stroke-width="1.1" stroke-linecap="round" stroke-linejoin="round"><path d="M8 1.800L14.800 14H1.200zM8 6v4.200M8 11.700v.6"/></svg>
<span class="u" style="top:1909.50px;font-size:30px;line-height:48px;color:#fff;left:1148px;">0</span>
<svg style="left:1205.0px;top:1914.0px;color:#fff;" width="36" height="36" viewBox="0 0 16 16" fill="none" stroke="currentColor" stroke-width="1.0" stroke-linecap="round" stroke-linejoin="round"><circle cx="8" cy="6" r="1.200"/><path d="M8 7.200L5.500 14.500M8 7.200l2.500 7.300M6.300 12h3.400M5 8.800a4 4 0 0 1 0-5.600M11 8.800a4 4 0 0 0 0-5.600M3 10.500a6.600 6.600 0 0 1 0-9M13 10.500a6.600 6.600 0 0 0 0-9"/></svg>
<span class="u" style="top:1909.50px;font-size:30px;line-height:48px;color:#fff;left:1246.7px;">0</span>
<svg style="left:1301.0px;top:1913.0px;color:#fff;" width="38" height="38" viewBox="0 0 16 16" fill="none" stroke="currentColor" stroke-width="1.0" stroke-linecap="round" stroke-linejoin="round"><path d="M5 7V1.500l10 6.500-4.500 2.900"/><ellipse cx="4.800" cy="12" rx="1.900" ry="2.300"/><path d="M3.300 10.300c.2-.9.800-1.300 1.500-1.300s1.300.4 1.500 1.300M2.900 12H1.300M8.300 12H6.700M3.100 10.600L1.900 9.700M6.500 10.600l1.200-.9M3.100 13.500l-1.200.9M6.500 13.500l1.200.9" stroke-width=".9"/></svg>
<span class="u" style="top:1909.50px;font-size:30px;line-height:48px;color:#fff;left:1347.8px;letter-spacing:-0.161px;">(gdb) 附加 (postgres)</span>
<svg style="left:2579.5px;top:1914.0px;color:#fff;" width="36" height="36" viewBox="0 0 16 16" fill="none" stroke="currentColor" stroke-width="1.2" stroke-linecap="round" stroke-linejoin="round"><circle cx="8" cy="8" r="3"/><path d="M8 5V1M8 11v4"/></svg>
<span class="u" style="top:1909.50px;font-size:30px;line-height:48px;color:#fff;left:2623.5px;letter-spacing:-0.447px;">Andres Freund, 10年前</span>
<span class="u" style="top:1909.50px;font-size:30px;line-height:48px;color:#fff;left:2964px;letter-spacing:-0.549px;">行 1351，列 1</span>
<span class="u" style="top:1909.50px;font-size:30px;line-height:48px;color:#fff;left:3190.5px;letter-spacing:-0.232px;">制表符长度: 4</span>
<span class="u" style="top:1909.50px;font-size:30px;line-height:48px;color:#fff;left:3412px;letter-spacing:-1.300px;">UTF-8</span>
<span class="u" style="top:1909.50px;font-size:30px;line-height:48px;color:#fff;left:3531px;transform:scaleX(0.8282);transform-origin:0 50%;">LF</span>
<span class="u" style="top:1909.50px;font-size:30px;line-height:48px;color:#fff;left:3600px;">C</span>
<span class="u" style="top:1909.50px;font-size:30px;line-height:48px;color:#fff;left:3658.7px;letter-spacing:-0.484px;">Linux</span>
<svg style="left:3766.5px;top:1913.0px;color:#fff;" width="38" height="38" viewBox="0 0 16 16" fill="none" stroke="currentColor" stroke-width="1.1" stroke-linecap="round" stroke-linejoin="round"><path d="M3 11.500h10l-1.200-1.800V7a3.800 3.800 0 0 0-7.600 0v2.700zM6.800 13.500a1.300 1.300 0 0 0 2.400 0"/></svg>
</body></html>
